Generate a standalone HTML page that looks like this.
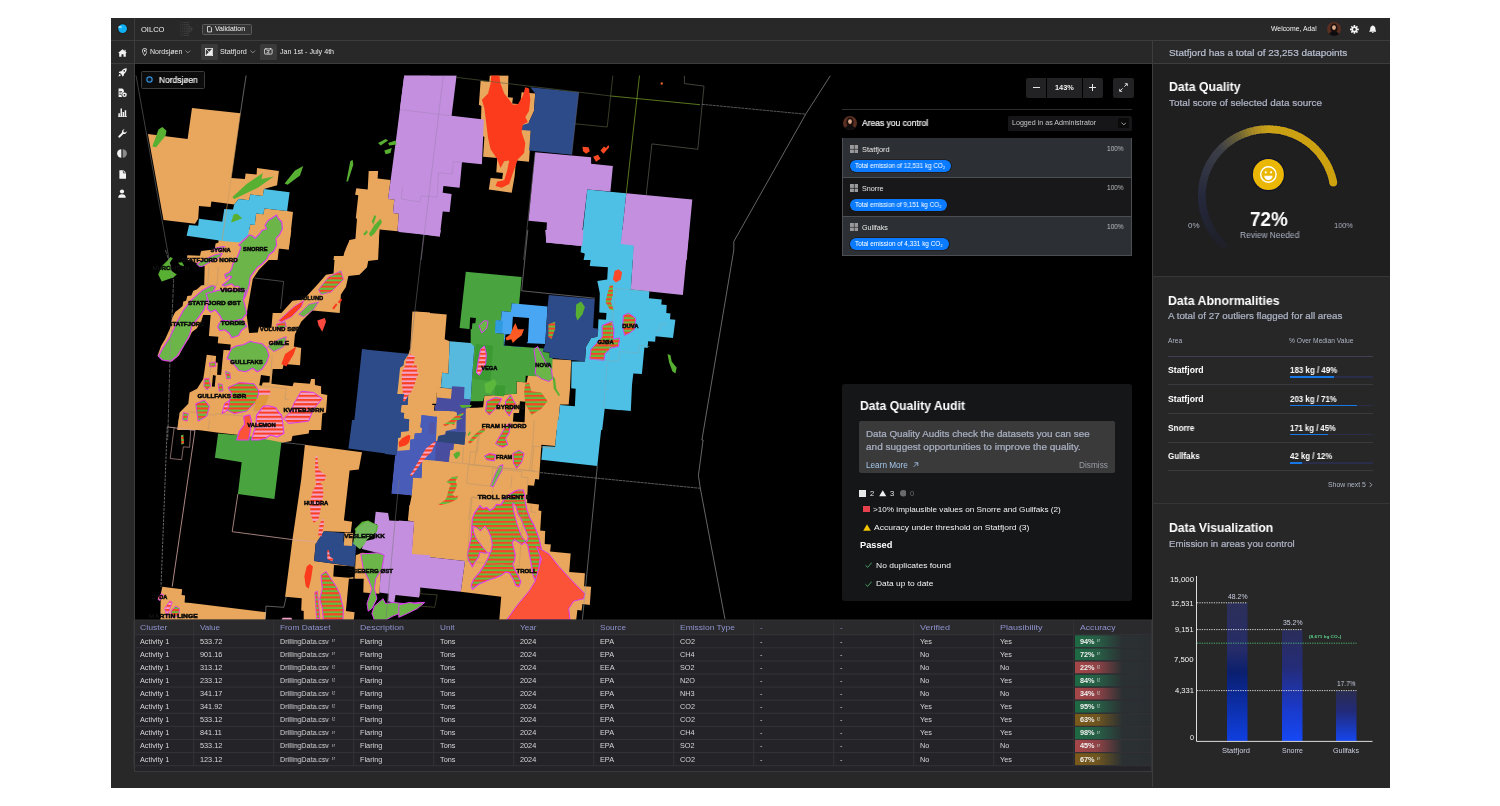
<!DOCTYPE html>
<html><head><meta charset="utf-8"><title>OILCO Validation</title>
<style>
*{box-sizing:border-box;margin:0;padding:0}
html,body{width:1500px;height:806px;background:#fff;overflow:hidden}
body{font-family:"Liberation Sans",sans-serif;color:#e6e6e6;position:relative}
.abs{position:absolute}
.t{position:absolute;white-space:nowrap;line-height:1;transform-origin:0 50%;will-change:transform}
#app{position:absolute;left:111px;top:18px;width:1279px;height:769.700px;background:#282828;overflow:hidden}
/* coordinates inside #app are offset by (-111,-18); we use a wrapper with page coords instead */
#pg{position:absolute;left:-111px;top:-18px;width:1500px;height:806px}
.hl{position:absolute;background:#3c3c3c;height:1px}
.vl{position:absolute;background:#3c3c3c;width:1px}
.b{font-weight:bold}
</style></head><body>
<div id="app"><div id="pg">
<div class="abs" style="left:111px;top:40px;width:1279px;height:1px;background:#3d3d3d;"></div>
<div class="abs" style="left:111px;top:63px;width:1041px;height:1px;background:#3d3d3d;"></div>
<div class="abs" style="left:134px;top:18px;width:1px;height:754px;background:#3d3d3d;"></div>
<svg class="abs" style="left:116.90px;top:23.20px" width="11" height="11" viewBox="0 0 11 11"><circle cx="5.5" cy="5.5" r="5" fill="#1a0f0c"/><circle cx="5.6" cy="5.6" r="4.4" fill="#10b0f5"/><rect x="1.2" y="3.4" width="3.6" height="1.1" rx=".5" fill="#fff"/></svg>
<div class="t" id="t0" style="top:25.62px;font-size:7.5px;color:#f0f0f0;left:140.80px;transform:scaleX(1.0067);">OILCO</div>
<svg class="abs" style="left:0;top:0" width="260" height="45"><rect x="180.0" y="22.2" width="0.8" height="0.8" fill="#fff" opacity="0.10"/><rect x="181.9" y="22.2" width="0.8" height="0.8" fill="#fff" opacity="0.15"/><rect x="183.8" y="22.2" width="0.8" height="0.8" fill="#fff" opacity="0.20"/><rect x="185.7" y="22.2" width="0.8" height="0.8" fill="#fff" opacity="0.25"/><rect x="187.6" y="22.2" width="0.8" height="0.8" fill="#fff" opacity="0.30"/><rect x="180.0" y="24.1" width="0.8" height="0.8" fill="#fff" opacity="0.10"/><rect x="181.9" y="24.1" width="0.8" height="0.8" fill="#fff" opacity="0.15"/><rect x="183.8" y="24.1" width="0.8" height="0.8" fill="#fff" opacity="0.20"/><rect x="185.7" y="24.1" width="0.8" height="0.8" fill="#fff" opacity="0.25"/><rect x="187.6" y="24.1" width="0.8" height="0.8" fill="#fff" opacity="0.30"/><rect x="180.0" y="25.9" width="0.8" height="0.8" fill="#fff" opacity="0.10"/><rect x="181.9" y="25.9" width="0.8" height="0.8" fill="#fff" opacity="0.15"/><rect x="183.8" y="25.9" width="0.8" height="0.8" fill="#fff" opacity="0.20"/><rect x="185.7" y="25.9" width="0.8" height="0.8" fill="#fff" opacity="0.25"/><rect x="187.6" y="25.9" width="0.8" height="0.8" fill="#fff" opacity="0.30"/><rect x="189.5" y="25.9" width="0.8" height="0.8" fill="#fff" opacity="0.35"/><rect x="180.0" y="27.8" width="0.8" height="0.8" fill="#fff" opacity="0.10"/><rect x="181.9" y="27.8" width="0.8" height="0.8" fill="#fff" opacity="0.15"/><rect x="183.8" y="27.8" width="0.8" height="0.8" fill="#fff" opacity="0.20"/><rect x="185.7" y="27.8" width="0.8" height="0.8" fill="#fff" opacity="0.25"/><rect x="187.6" y="27.8" width="0.8" height="0.8" fill="#fff" opacity="0.30"/><rect x="189.5" y="27.8" width="0.8" height="0.8" fill="#fff" opacity="0.35"/><rect x="191.4" y="27.8" width="0.8" height="0.8" fill="#fff" opacity="0.40"/><rect x="180.0" y="29.6" width="0.8" height="0.8" fill="#fff" opacity="0.10"/><rect x="181.9" y="29.6" width="0.8" height="0.8" fill="#fff" opacity="0.15"/><rect x="183.8" y="29.6" width="0.8" height="0.8" fill="#fff" opacity="0.20"/><rect x="185.7" y="29.6" width="0.8" height="0.8" fill="#fff" opacity="0.25"/><rect x="187.6" y="29.6" width="0.8" height="0.8" fill="#fff" opacity="0.30"/><rect x="189.5" y="29.6" width="0.8" height="0.8" fill="#fff" opacity="0.35"/><rect x="191.4" y="29.6" width="0.8" height="0.8" fill="#fff" opacity="0.40"/><rect x="180.0" y="31.4" width="0.8" height="0.8" fill="#fff" opacity="0.10"/><rect x="181.9" y="31.4" width="0.8" height="0.8" fill="#fff" opacity="0.15"/><rect x="183.8" y="31.4" width="0.8" height="0.8" fill="#fff" opacity="0.20"/><rect x="185.7" y="31.4" width="0.8" height="0.8" fill="#fff" opacity="0.25"/><rect x="187.6" y="31.4" width="0.8" height="0.8" fill="#fff" opacity="0.30"/><rect x="189.5" y="31.4" width="0.8" height="0.8" fill="#fff" opacity="0.35"/><rect x="180.0" y="33.3" width="0.8" height="0.8" fill="#fff" opacity="0.10"/><rect x="181.9" y="33.3" width="0.8" height="0.8" fill="#fff" opacity="0.15"/><rect x="183.8" y="33.3" width="0.8" height="0.8" fill="#fff" opacity="0.20"/><rect x="185.7" y="33.3" width="0.8" height="0.8" fill="#fff" opacity="0.25"/><rect x="187.6" y="33.3" width="0.8" height="0.8" fill="#fff" opacity="0.30"/><rect x="180.0" y="35.1" width="0.8" height="0.8" fill="#fff" opacity="0.10"/><rect x="181.9" y="35.1" width="0.8" height="0.8" fill="#fff" opacity="0.15"/><rect x="183.8" y="35.1" width="0.8" height="0.8" fill="#fff" opacity="0.20"/><rect x="185.7" y="35.1" width="0.8" height="0.8" fill="#fff" opacity="0.25"/><rect x="187.6" y="35.1" width="0.8" height="0.8" fill="#fff" opacity="0.30"/></svg>
<div class="abs" style="left:201.5px;top:24px;width:50.0px;height:11px;background:#333;border:1px solid #5a5a5a;border-radius:1.5px;"></div>
<svg class="abs" style="left:206.50px;top:26.20px" width="5" height="6.4" viewBox="0 0 5 6.4"><path d="M.5 .5h2.6l1.4 1.4v4H.5z" fill="none" stroke="#eee" stroke-width=".8"/></svg>
<div class="t" id="t1" style="top:26.44px;font-size:6.8px;color:#f2f2f2;left:214.50px;transform:scaleX(1.0218);">Validation</div>
<div class="t" id="t2" style="top:26.34px;font-size:6.8px;color:#f0f0f0;left:1271.20px;transform:scaleX(1.0089);">Welcome, Ada!</div>
<svg class="abs" style="left:1326.80px;top:22.30px" width="14" height="14" viewBox="0 0 14 14"><defs><clipPath id="av"><circle cx="7" cy="7" r="7"/></clipPath></defs><g clip-path="url(#av)"><rect width="14" height="14" fill="#5a2f22"/><ellipse cx="7" cy="6.3" rx="3.6" ry="4.8" fill="#1c0f0c"/><ellipse cx="7" cy="5.6" rx="1.9" ry="2.4" fill="#d9a98c"/><path d="M1.5 14c.5-3.6 2.8-4.6 5.5-4.6s5 1 5.5 4.6z" fill="#0d0d10"/></g></svg>
<svg class="abs" style="left:1350.00px;top:24.90px" width="8.8" height="8.8" viewBox="0 0 10 10"><g fill="#f2f2f2"><rect x="4.05" y="0" width="1.9" height="2.6" rx=".3" transform="rotate(0 5 5)"/><rect x="4.05" y="0" width="1.9" height="2.6" rx=".3" transform="rotate(45 5 5)"/><rect x="4.05" y="0" width="1.9" height="2.6" rx=".3" transform="rotate(90 5 5)"/><rect x="4.05" y="0" width="1.9" height="2.6" rx=".3" transform="rotate(135 5 5)"/><rect x="4.05" y="0" width="1.9" height="2.6" rx=".3" transform="rotate(180 5 5)"/><rect x="4.05" y="0" width="1.9" height="2.6" rx=".3" transform="rotate(225 5 5)"/><rect x="4.05" y="0" width="1.9" height="2.6" rx=".3" transform="rotate(270 5 5)"/><rect x="4.05" y="0" width="1.9" height="2.6" rx=".3" transform="rotate(315 5 5)"/><circle cx="5" cy="5" r="3.3"/></g><circle cx="5" cy="5" r="1.45" fill="#282828"/></svg>
<svg class="abs" style="left:1368.50px;top:25.10px" width="7.6" height="8.4" viewBox="0 0 9 10"><path d="M4.5 .4c.5 0 .8.3.8.8 1.500 .4 2.300 1.600 2.300 3.100 0 1.700.4 2.600 1.100 3.200v.6H.3v-.6C1 6.900 1.400 6 1.400 4.300c0-1.500.8-2.700 2.300-3.100 0-.5.300-.8.800-.8z" fill="#f2f2f2"/><path d="M3.400 8.700h2.200a1.100 1.100 0 0 1-2.200 0z" fill="#f2f2f2"/></svg>
<svg class="abs" style="left:117.80px;top:48.60px" width="9" height="8" viewBox="0 0 9 8"><path d="M4.5 .3 9 4.100H7.800V7.800H5.500V5.300H3.500V7.800H1.200V4.100H0z" fill="#f2f2f2"/><rect x="6.5" y=".8" width="1.1" height="2" fill="#f2f2f2"/></svg>
<svg class="abs" style="left:117.80px;top:68.30px" width="9" height="9" viewBox="0 0 9 9"><path d="M8.700 .3c.2 2.500-.8 4.300-2.700 5.600l-.3 1.900-1.500.8-.2-1.700L2.400 5.300.7 5.100l.8-1.500 1.900-.3C4.700 1.300 6.400.2 8.700.3z" fill="#f2f2f2"/><path d="M1.800 6.100 2.900 7.200C2.300 8 1.400 8.300.5 8.500c.2-.9.500-1.800 1.300-2.400z" fill="#f2f2f2"/><circle cx="6.200" cy="2.900" r=".8" fill="#282828"/></svg>
<svg class="abs" style="left:117.80px;top:88.45px" width="9" height="9.5" viewBox="0 0 9 9.5"><path d="M.6 .4h3.800l1.500 1.500V4.300a2.800 2.800 0 0 0-1.700 4.700H.6z" fill="#f2f2f2"/><rect x="1.300" y="3" width="2.700" height=".7" fill="#282828"/><rect x="1.300" y="4.500" width="2.200" height=".7" fill="#282828"/><rect x="1.300" y="6" width="1.900" height=".7" fill="#282828"/><circle cx="6.500" cy="6.800" r="2.300" fill="#f2f2f2"/><circle cx="6.500" cy="6.800" r=".9" fill="#282828"/></svg>
<svg class="abs" style="left:117.80px;top:108.30px" width="9" height="9" viewBox="0 0 9 9"><path d="M.4 8.800V5.300h1.500V8.800zM2.500 8.800V.4H4V8.800zM4.600 8.800V4h1.500V8.800zM6.700 8.800V2.300h1.500V8.800z" fill="#f2f2f2"/><rect x="0" y="8.300" width="9" height=".7" fill="#f2f2f2"/></svg>
<svg class="abs" style="left:117.80px;top:128.60px" width="9" height="9" viewBox="0 0 9 9"><path d="M8.700 2.300A2.600 2.600 0 0 1 5.300 4.900L1.900 8.400A1 1 0 0 1 .5 7L4 3.600A2.600 2.600 0 0 1 6.700 .3L5.300 1.700l.4 1.500 1.500.4z" fill="#f2f2f2"/></svg>
<svg class="abs" style="left:117.30px;top:149.10px" width="10" height="9" viewBox="0 0 10 9"><path d="M4.300 .3V8.700A4.200 4.200 0 0 1 4.300 .3z" fill="#f2f2f2"/><path d="M5.700 .3A4.200 4.200 0 0 1 5.700 8.700z" fill="#8a8a8a"/></svg>
<svg class="abs" style="left:118.55px;top:169.60px" width="7.5" height="9" viewBox="0 0 7.5 9"><path d="M.4 .3H4.600L7.100 2.800V8.700H.4z" fill="#f2f2f2"/><path d="M4.400 .5V3H6.900" fill="none" stroke="#282828" stroke-width=".7"/></svg>
<svg class="abs" style="left:118.30px;top:189.40px" width="8" height="9" viewBox="0 0 8 9"><circle cx="4" cy="2.500" r="2.100" fill="#f2f2f2"/><path d="M.2 8.800C.3 6.300 1.800 5.300 4 5.300s3.700 1 3.800 3.500z" fill="#f2f2f2"/></svg>
<svg class="abs" style="left:141.55px;top:47.50px" width="5.5" height="8" viewBox="0 0 5.5 8"><path d="M2.750 .4A2.350 2.350 0 0 1 5.100 2.750C5.100 4.500 2.750 7.600 2.750 7.600S.4 4.500 .4 2.750A2.350 2.350 0 0 1 2.750 .4z" fill="none" stroke="#eee" stroke-width=".8"/><circle cx="2.750" cy="2.750" r=".9" fill="#eee"/></svg>
<div class="t" id="t3" style="top:48.45px;font-size:7px;color:#e8e8e8;left:150.40px;transform:scaleX(0.9908);">Nordsjøen</div>
<svg class="abs" style="left:185.40px;top:50.15px" width="5.6" height="3.5" viewBox="0 0 5.6 3.5"><path d="M.5 .6 2.800 2.900 5.100 .6" fill="none" stroke="#aaa" stroke-width=".8"/></svg>
<div class="abs" style="left:201px;top:43.6px;width:16.599999999999994px;height:16.0px;background:#3a3a3a;border-radius:1.5px;"></div>
<svg class="abs" style="left:205.30px;top:47.60px" width="8" height="8" viewBox="0 0 8 8"><rect x=".4" y=".4" width="7.200" height="7.200" fill="none" stroke="#eee" stroke-width=".8"/><path d="M.8 7.200 7.200 .8V7.200z" fill="#eee"/><path d="M0 0 8 8" stroke="#eee" stroke-width=".8"/></svg>
<div class="t" id="t4" style="top:48.45px;font-size:7px;color:#e8e8e8;left:220.00px;transform:scaleX(1.0315);">Statfjord</div>
<svg class="abs" style="left:250.20px;top:50.15px" width="5.6" height="3.5" viewBox="0 0 5.6 3.5"><path d="M.5 .6 2.800 2.900 5.100 .6" fill="none" stroke="#aaa" stroke-width=".8"/></svg>
<div class="abs" style="left:260px;top:43.6px;width:16.80000000000001px;height:16.0px;background:#3a3a3a;border-radius:1.5px;"></div>
<svg class="abs" style="left:264.15px;top:48.35px" width="8.5" height="6.5" viewBox="0 0 8.5 6.5"><rect x=".4" y=".9" width="7.700" height="5.200" rx=".8" fill="none" stroke="#eee" stroke-width=".8"/><rect x="1.500" y="0" width=".8" height="1.600" fill="#eee"/><rect x="6.200" y="0" width=".8" height="1.600" fill="#eee"/><path d="M2.600 2.600h2.800L3.700 4.800M2.500 4.900h3" fill="none" stroke="#eee" stroke-width=".7"/></svg>
<div class="t" id="t5" style="top:48.45px;font-size:7px;color:#e8e8e8;left:279.50px;transform:scaleX(1.0223);">Jan 1st - July 4th</div><div class="abs" style="left:135px;top:64px;width:1017px;height:556px;background:#000"></div><svg class="abs" style="left:0;top:0" width="1500" height="806" viewBox="0 0 1500 806"><defs><clipPath id="mc"><rect x="135" y="75.300" width="1017" height="544.400"/></clipPath><pattern id="hrg" width="4" height="4.200" patternUnits="userSpaceOnUse"><rect width="4" height="4.200" fill="#60c03e"/><rect width="4" height="2.100" fill="#fb4226"/></pattern><pattern id="hrp" width="4" height="4.200" patternUnits="userSpaceOnUse"><rect width="4" height="4.200" fill="#f4a2c6"/><rect width="4" height="2.100" fill="#fb3f20"/></pattern><filter id="mb" x="0" y="0" width="1500" height="806" filterUnits="userSpaceOnUse"><feGaussianBlur stdDeviation="0.450"/></filter></defs><g clip-path="url(#mc)"><g filter="url(#mb)"><polygon points="147.9,133.9 187.6,138.9 192.0,107.9 240.4,113.3 231.2,177.9 244.9,179.1 245.6,173.6 256.6,174.6 257.0,167.9 278.9,170.9 277.1,185.3 264.0,189.0 262.8,196.0 250.3,194.5 249.1,200.2 238.7,199.0 234.2,204.4 211.4,201.4 210.6,206.9 199.0,205.9 198.2,218.8 195.0,223.8 163.5,220.0" fill="#e9a65d"/><polygon points="264.5,208.4 287.1,210.9 293.0,211.9 288.8,249.8 278.9,248.6 277.6,260.0 199.5,260.0 200.7,252.3 214.4,251.1 215.6,243.6 223.1,241.1 239.2,242.4 247.9,235.7 250.3,224.5 254.8,225.0 256.1,213.6 263.3,214.3" fill="#e9a65d"/><polygon points="368.7,170.9 378.1,170.9 377.6,178.6 390.5,179.9 388.1,199.0 394.3,199.5 393.0,213.1 398.7,213.8 397.5,231.2 379.4,229.5 378.1,248.6 354.6,246.1 354.1,260.0 333.5,260.0 334.0,256.0 343.9,256.0 344.9,251.1 348.4,251.1 349.6,239.9 355.3,240.6 357.0,218.8 355.8,218.3 358.3,195.2 355.1,194.7 356.3,188.3 367.7,189.5" fill="#e9a65d"/><polygon points="218.8,230.0 291.3,230.0 288.8,247.4 278.9,248.6 269.0,259.8 259.0,269.7 252.8,279.1 246.6,314.4 249.1,333.0 257.8,332.5 259.0,326.8 271.4,328.0 272.7,313.1 281.4,313.1 292.5,300.7 303.7,299.5 318.6,283.3 326.0,274.7 333.5,273.4 334.7,257.3 343.4,256.1 345.9,248.6 349.6,239.9 355.8,238.7 357.0,230.0 379.4,230.0 378.1,259.8 368.2,261.0 367.0,267.2 359.5,274.7 348.4,275.9 345.9,287.1 340.9,294.5 339.7,313.1 312.4,310.6 301.2,321.8 295.0,334.2 293.8,346.6 301.2,347.9 300.0,365.2 283.8,364.0 282.6,369.0 272.7,369.0 271.4,383.8 292.5,386.3 293.8,382.6 309.9,383.8 311.1,378.9 314.9,378.9 314.9,385.1 321.1,386.3 321.1,393.8 327.3,395.0 326.0,412.4 322.3,413.6 321.1,430.0 177.1,430.0 179.6,412.4 188.3,403.7 189.6,392.5 197.0,388.8 203.2,378.9 204.4,371.4 206.7,354.8 216.1,356.1 215.6,362.5 217.8,362.8 217.1,374.7 221.1,374.9 223.5,349.9 230.2,350.3 230.7,344.6 217.8,343.2 218.3,336.7 208.9,336.0 210.6,315.1 203.2,315.1 201.2,321.6 196.7,328.5 192.0,332.0 188.6,338.9 183.8,345.9 179.1,355.3 172.2,361.3 165.2,361.3 157.5,355.8 161.0,345.9 165.2,338.9 170.0,328.5 172.2,318.1 175.2,312.1 179.1,308.9 182.6,305.9 183.3,301.5 186.1,300.7 187.3,296.0 191.3,295.5 193.3,290.8 196.7,289.6 201.2,285.6 204.2,285.1 204.7,266.2 190.3,260.5 186.8,259.8 187.3,255.3 200.7,255.8 201.2,251.1 218.3,248.9 218.8,230.0" fill="#e9a65d"/><polygon points="415.4,311.4 430.0,312.6 430.0,414.9 422.8,414.9 420.3,430.0 403.0,430.0 404.2,413.6 401.7,412.4 403.0,388.8 399.2,387.6 400.5,373.9 405.4,369.0 406.7,354.1 410.4,354.1" fill="#e9a65d"/><polygon points="178.4,420.0 318.6,420.0 317.3,425.0 309.9,426.2 308.7,433.6 292.5,436.1 291.3,441.1 281.4,442.8 249.1,443.6 247.9,436.1 216.8,432.4 202.0,430.4 179.6,427.9" fill="#e9a65d"/><polygon points="304.9,444.8 362.0,452.3 358.8,469.6 349.6,470.4 343.9,520.5 352.1,521.7 350.8,532.2 324.0,531.2 315.6,544.1 314.1,560.9 354.6,566.4 353.3,578.8 348.9,578.8 345.9,611.1 354.6,612.3 353.8,620.0 303.7,620.0 303.7,611.1 301.2,610.6 301.7,598.2 285.1,596.7 292.5,539.1 301.2,479.6" fill="#e9a65d"/><polygon points="355.8,555.2 362.0,552.8 381.9,554.0 379.4,593.7 363.3,592.5 363.7,578.8 354.6,578.8" fill="#e9a65d"/><polygon points="410.4,428.7 415.4,427.4 420.3,428.7 419.1,434.9 414.1,438.6 412.9,451.0 396.7,449.3 398.0,441.1 409.2,434.9" fill="#e9a65d"/><polygon points="419.1,459.7 430.0,460.9 430.0,555.2 411.6,554.0 414.1,521.7 407.9,520.5 410.4,494.4 415.4,495.7 419.1,477.1" fill="#e9a65d"/><polygon points="162.3,586.7 182.1,589.2 181.6,594.9 185.1,595.4 184.6,602.4 190.8,603.1 266.0,612.3 265.2,620.0 160.3,620.0 160.8,593.7" fill="#e9a65d"/><polygon points="489.8,75.4 508.4,75.4 507.9,97.2 512.9,97.7 512.2,103.4 520.3,104.2 521.6,92.3 535.2,93.5 534.0,110.9 529.0,122.0 530.8,130.7 529.8,150.6 529.0,161.7 516.1,160.5 514.6,176.6 511.7,192.8 488.8,189.5 490.6,177.9 502.2,179.1 503.0,172.9 496.3,172.2 497.3,158.0 483.1,156.8 484.4,136.9 480.6,134.4 481.4,105.9 478.9,104.7 480.6,81.1 489.3,81.8" fill="#e9a65d"/><polygon points="412.4,311.4 446.7,314.4 444.7,339.2 449.6,341.2 448.4,373.4 442.2,372.7 440.9,387.6 437.2,388.8 436.0,403.7 432.3,403.7 431.0,416.1 419.9,414.9 418.6,430.0 398.8,430.0 398.8,416.1 407.4,414.9 409.9,354.1" fill="#e9a65d"/><polygon points="484.4,395.8 516.6,393.8 516.6,381.4 526.6,382.6 527.8,376.4 534.0,364.0 550.9,365.2 551.9,359.0 571.2,360.3 570.0,388.8 568.7,404.4 560.0,404.4 557.6,430.0 467.0,430.0 468.2,408.7 483.1,407.4" fill="#e9a65d"/><polygon points="467.0,420.0 557.6,420.0 555.1,446.1 541.4,444.8 539.0,479.6 535.2,479.1 534.0,485.8 527.8,485.3 527.0,503.1 539.0,504.4 538.5,510.6 541.4,511.1 540.2,530.4 545.2,530.9 544.7,544.1 550.9,544.6 550.1,551.5 570.7,553.5 569.2,571.9 584.9,573.3 584.1,586.3 591.1,586.7 589.8,604.9 582.4,604.1 581.6,610.6 577.4,610.1 576.2,620.0 499.3,620.0 501.2,596.7 460.8,591.7 465.0,560.9 411.9,555.2 414.9,519.3 408.7,518.8 412.4,478.3 419.9,478.8 421.1,460.9 448.4,462.2 449.6,452.3 463.3,453.5 465.0,443.6 465.8,429.9" fill="#e9a65d"/><polygon points="411.2,420.0 423.6,420.0 422.3,437.4 414.9,436.9 413.6,444.8 398.8,443.6 398.8,434.9 409.9,435.4" fill="#e9a65d"/><polygon points="437.2,420.0 457.6,420.0 456.6,427.9 445.9,426.9 445.2,431.9 436.7,431.2" fill="#e9a65d"/><polygon points="437.2,387.6 453.3,388.8 452.1,403.7 436.0,403.7" fill="#e9a65d"/><polygon points="261.0,375.1 269.9,376.2 269.4,382.4 262.7,382.4 261.8,385.7 259.3,385.5" fill="#000"/><polygon points="213.0,375.1 215.8,375.7 214.7,386.8 211.9,386.6" fill="#000"/><polygon points="334.0,564.9 354.4,566.5 354.0,577.1 348.8,577.7 333.3,576.4" fill="#000"/><polygon points="264.0,189.0 289.6,192.3 287.1,210.9 264.5,208.4 263.3,214.3 256.1,213.6 254.8,225.0 250.3,224.5 247.9,235.7 239.2,242.4 223.1,241.1 186.6,235.7 189.1,225.0 198.2,225.8 199.0,218.8 222.3,221.8 224.3,208.9 233.0,209.6 234.2,204.4 238.7,199.0 249.1,200.2 250.3,194.5 262.8,196.0" fill="#4fc0e5"/><polygon points="404.2,75.4 430.0,75.4 430.0,233.7 397.5,231.2 398.7,213.8 393.0,213.1 394.3,199.5 388.1,199.0 396.7,134.4" fill="#c48fdf"/><polygon points="362.0,349.1 410.4,354.1 403.0,430.0 353.3,430.0" fill="#2e4b89"/><polygon points="422.8,414.9 430.0,414.9 430.0,430.0 420.3,430.0" fill="#4a5ab0"/><polygon points="218.1,433.6 247.9,436.1 281.4,442.3 274.4,498.9 237.9,493.9 241.7,462.2 214.9,457.7" fill="#49a441"/><polygon points="352.1,420.0 400.5,420.0 395.5,454.7 348.4,448.5" fill="#2e4b89"/><polygon points="324.0,531.2 343.9,532.9 343.4,541.6 356.3,542.8 354.6,566.4 314.1,560.9 315.6,544.1" fill="#2e4b89"/><polygon points="400.5,420.0 415.4,420.0 414.9,425.0 430.0,426.2 430.0,439.9 412.9,438.6 411.6,452.3 410.4,475.8 419.1,477.1 415.4,495.7 391.8,492.0 395.5,454.7" fill="#4a5ab0"/><polygon points="412.9,438.6 430.0,439.9 430.0,477.1 410.4,475.8" fill="#4f5cc0"/><polygon points="375.7,511.8 388.1,513.1 389.3,520.5 414.1,521.7 411.6,554.0 430.0,555.2 430.0,586.3 420.3,586.7 419.1,597.4 395.5,594.9 394.3,602.4 388.1,601.6 388.6,593.7 379.4,592.5 381.9,554.0 362.0,549.0 363.3,541.6 374.4,539.1 376.9,524.2 374.4,523.7" fill="#c48fdf"/><polygon points="404.2,75.4 456.6,75.4 451.6,115.8 483.9,119.6 481.9,164.2 462.0,162.2 459.6,187.8 443.4,186.1 442.7,192.8 451.6,194.0 449.6,211.9 442.7,211.4 439.7,236.7 400.0,231.2 400.0,108.4" fill="#c48fdf"/><polygon points="530.3,87.3 578.7,92.3 571.7,154.8 529.0,150.6 530.8,130.7 521.6,130.0 522.3,125.0 528.3,123.3 534.0,110.9 535.2,93.5" fill="#2e4b89"/><polygon points="535.2,152.3 591.1,157.3 591.1,163.7 612.9,166.0 610.4,191.5 587.3,189.5 580.6,246.1 545.9,242.4 546.9,222.5 528.5,220.8" fill="#c48fdf"/><polygon points="587.3,189.5 626.3,193.3 620.8,244.9 633.7,246.1 632.8,260.0 583.6,260.0 584.9,253.5 580.6,252.3" fill="#4fc0e5"/><polygon points="626.3,193.3 692.3,199.5 686.6,260.0 632.8,260.0 633.7,246.1 620.8,244.9" fill="#c48fdf"/><polygon points="398.8,230.0 440.9,230.0 439.7,236.2 398.8,232.0" fill="#c48fdf"/><polygon points="545.2,230.0 583.6,230.0 582.4,246.1 546.4,242.4" fill="#c48fdf"/><polygon points="622.1,230.0 689.1,230.0 682.9,295.0 630.8,289.6 633.7,245.4 620.8,244.1" fill="#c48fdf"/><polygon points="583.6,230.0 622.1,230.0 620.8,244.1 633.7,245.4 630.8,289.6 649.4,291.3 648.9,298.2 661.8,299.5 661.3,304.4 666.7,304.9 666.3,313.1 670.5,313.6 670.0,319.3 675.4,319.8 673.0,337.9 655.6,336.2 655.1,341.7 648.1,341.2 647.6,347.9 644.4,347.6 641.9,373.9 633.3,373.4 632.0,385.1 630.8,411.1 604.7,408.7 602.2,430.0 557.6,430.0 560.0,404.9 574.9,406.2 575.7,388.8 571.2,388.3 571.7,361.5 584.9,361.5 586.1,346.6 591.1,337.9 597.3,336.7 598.0,329.3 598.5,319.3 606.0,319.8 606.5,313.1 599.3,312.4 599.8,293.3 597.3,280.9 607.2,279.6 607.9,267.2 589.8,266.0 590.6,259.8 584.9,253.6 581.9,252.3" fill="#4fc0e5"/><polygon points="465.8,271.7 521.6,277.1 519.1,304.4 511.7,303.2 510.9,311.9 501.7,311.1 501.0,320.6 496.3,320.1 495.0,333.0 504.2,333.7 503.7,345.4 523.3,347.1 543.9,348.6 543.2,352.1 549.6,352.8 549.6,357.5 552.6,358.0 551.9,376.9 525.8,375.7 525.3,382.6 516.6,381.4 516.6,393.8 484.4,395.8 483.1,401.2 470.7,401.2 472.0,378.9 474.4,346.6 470.7,345.4 470.7,329.3 459.6,328.0" fill="#49a441"/><polygon points="475.7,344.1 493.1,345.4 490.6,381.4 473.2,378.9" fill="#3b9b33"/><polygon points="495.5,385.1 505.5,385.8 504.2,396.3 494.3,395.8" fill="#3b9b33"/><polygon points="511.7,303.2 547.6,306.4 545.2,344.1 524.1,342.9 523.3,347.1 503.7,345.4 504.2,333.7 495.0,333.0 496.3,320.1 501.0,320.6 501.7,311.1 510.9,311.9" fill="#4aa6f2"/><polygon points="495.5,320.6 503.0,321.1 502.2,333.0 495.0,332.5" fill="#2f9ae0"/><polygon points="512.9,316.8 529.0,318.1 527.8,341.7 523.3,347.1 504.2,345.4 505.5,334.2 511.7,334.2" fill="#000"/><polygon points="548.9,295.0 594.8,299.0 593.1,328.0 598.5,328.8 597.3,336.7 591.1,337.9 586.1,346.6 584.9,361.5 549.6,357.8 549.4,352.3 542.7,351.6 545.2,344.1 547.6,306.4" fill="#2e4b89"/><polygon points="449.6,341.2 470.7,342.9 474.4,346.6 472.0,378.9 470.7,401.2 452.1,400.0 452.6,388.8 440.9,387.6 442.2,372.7 448.4,373.4" fill="#56b9dd"/><polygon points="398.8,354.1 403.7,354.6 409.9,354.1 407.4,414.9 398.8,416.1" fill="#2e4b89"/><polygon points="452.1,386.3 464.5,387.1 464.0,398.7 470.7,399.2 469.5,408.7 467.0,430.0 458.3,430.0 437.2,428.5 436.0,403.7 437.2,397.5 450.9,398.7" fill="#4a4ea0"/><polygon points="421.1,414.9 437.2,416.1 436.7,430.0 419.9,430.0" fill="#4a5fc8"/><polygon points="557.6,420.0 602.2,420.0 597.3,465.9 541.4,459.7 542.7,446.1 555.1,446.8" fill="#4fc0e5"/><polygon points="398.8,520.5 413.6,521.7 411.9,555.2 465.0,560.9 460.8,591.7 419.9,587.5 419.4,596.2 398.8,593.7" fill="#c48fdf"/><polygon points="398.8,420.0 467.0,420.0 465.0,443.6 463.3,453.5 449.6,452.3 448.4,462.2 421.1,460.9 419.9,478.8 412.4,478.3 409.9,494.4 398.8,493.9" fill="#4a5ab0"/><polygon points="398.8,420.0 409.9,420.0 408.7,429.9 398.8,429.4" fill="#2e4b89"/><polygon points="437.2,434.9 467.0,437.4 465.0,443.6 463.3,453.5 449.6,452.3 448.4,462.2 437.2,460.9" fill="#4a4ea0"/><polygon points="438.5,434.9 466.5,437.4 465.8,444.8 437.2,442.3" fill="#2f4a88"/><polygon points="423.6,420.0 437.2,420.0 436.7,431.2 437.2,434.9 436.0,452.3 421.1,451.0 422.3,437.4" fill="#4f5cc0"/><polygon points="465.6,408.1 485.0,407.5 485.0,505.0 409.8,505.0 411.7,495.6 412.9,477.6 421.6,478.2 422.2,459.6 448.9,462.1 450.1,450.3 453.2,449.7 453.9,443.5 464.4,444.7 465.6,432.3" fill="#e9a65d"/><polygon points="401.7,405.0 434.6,405.0 434.0,410.6 454.5,411.2 457.0,412.4 456.3,428.6 445.8,431.1 445.2,434.2 438.3,436.0 437.1,441.0 435.2,441.0 435.9,417.4 421.6,414.9 420.4,427.3 422.2,428.0 421.6,432.9 414.8,433.5 414.2,439.1 410.4,439.7 409.8,450.3 397.4,450.9 398.0,437.9 400.5,437.3 401.1,431.7 408.6,431.1 409.2,419.3 403.6,418.6 404.2,413.1 400.5,412.4" fill="#e9a65d"/><polygon points="385.0,405.0 401.1,405.0 400.5,412.4 404.2,413.1 403.6,418.6 409.2,419.3 408.6,431.1 401.1,431.7 400.5,437.3 398.0,437.9 396.8,455.2 385.0,454.0" fill="#2e4b89"/><polygon points="414.8,433.5 421.6,432.9 422.2,428.0 420.4,427.3 421.6,414.9 437.1,416.8 435.9,441.0 435.2,459.6 422.2,459.6 421.6,478.2 412.9,477.6 411.7,495.6 391.2,493.7 394.9,455.9 396.8,455.2 397.4,450.9 409.8,450.3 410.4,439.7 414.2,439.1" fill="#4a5cb8"/><polygon points="429.0,421.7 435.2,422.4 434.6,434.2 428.4,433.5" fill="#5055a8"/><polygon points="437.1,441.6 453.9,443.5 453.2,449.7 450.1,450.3 448.9,462.1 435.2,460.2 435.9,441.0" fill="#4a4ea0"/><polygon points="446.4,431.1 465.6,432.3 464.4,444.7 453.9,443.5 438.3,441.6 439.0,436.0 445.2,434.8" fill="#2f4478"/><polygon points="435.2,405.0 465.6,405.0 470.6,407.5 465.6,408.7 465.0,431.7 457.0,431.1 457.0,412.4 454.5,411.2 434.6,410.6" fill="#4a4ea0"/><polygon points="385.0,454.6 394.9,455.9 391.2,493.7 411.7,495.6 409.8,505.0 385.0,505.0" fill="#000"/><polygon points="344.5,532.4 353.2,533.0 351.9,546.0 343.9,545.4" fill="#e9a65d"/><polygon points="158.5,129.5 162.3,127.0 166.5,130.7 165.5,135.7 156.1,147.3 152.3,146.4" fill="#59b032"/><polygon points="232.5,197.0 246.6,184.1 262.8,172.9 261.5,179.1 273.9,176.6 257.8,187.8 234.2,199.0" fill="#59b032"/><polygon points="284.6,183.6 295.0,170.4 303.2,166.0 300.0,175.4 287.6,184.8" fill="#59b032"/><polygon points="346.4,181.6 350.3,161.2 352.6,159.8 353.3,164.7 347.9,181.6" fill="#59b032"/><polygon points="231.0,222.5 233.7,214.3 237.2,213.8 242.2,218.3 233.7,221.8" fill="#59b032"/><polygon points="378.1,143.1 385.6,138.9 388.1,140.6 380.6,145.6" fill="#59b032"/><polygon points="388.1,143.1 395.5,140.6 396.7,144.4 389.3,145.6" fill="#59b032"/><polygon points="384.3,150.6 391.8,148.1 390.5,153.1 385.6,154.3" fill="#59b032"/><polygon points="369.0,233.7 374.4,225.0 380.6,218.8 381.9,222.5 374.4,233.7 370.7,236.7" fill="#59b032"/><polygon points="371.9,221.3 374.4,215.1 376.2,216.3 373.2,225.0" fill="#59b032"/><polygon points="363.3,233.7 367.0,230.0 367.7,232.5 364.5,235.7" fill="#59b032"/><polygon points="278.9,320.6 293.8,306.9 303.7,300.7 301.2,306.9 291.3,316.8 281.4,321.8" fill="#fb3a1d" stroke="#dc3cf2" stroke-width="0.8" stroke-linejoin="round"/><polygon points="298.7,314.4 308.7,304.4 318.6,302.0 313.6,309.4 303.7,316.8" fill="#6cb548" stroke="#dc3cf2" stroke-width="0.8" stroke-linejoin="round"/><polygon points="318.6,289.6 328.5,277.1 340.9,270.9 343.4,279.6 336.0,287.1 331.0,292.0 321.1,294.5" fill="url(#hrg)" stroke="#dc3cf2" stroke-width="0.8" stroke-linejoin="round"/><polygon points="332.2,308.2 336.0,303.2 337.4,304.4 334.0,309.4" fill="#fb3a1d"/><polygon points="337.9,302.0 340.9,298.2 342.2,300.0 339.2,303.4" fill="#fb3a1d"/><polygon points="317.3,320.6 324.8,318.1 326.0,321.8 322.3,331.7 318.6,325.5" fill="#fb4a40"/><polygon points="281.4,364.0 285.1,354.1 296.3,346.6 293.8,354.1 286.3,366.5" fill="#fb3a1d"/><polygon points="267.7,346.6 278.9,339.2 286.3,336.7 283.8,346.6 273.9,351.6" fill="#6cb548" stroke="#dc3cf2" stroke-width="0.8" stroke-linejoin="round"/><polygon points="276.4,324.3 285.1,321.8 286.3,326.8 278.9,329.3" fill="url(#hrg)" stroke="#dc3cf2" stroke-width="0.8" stroke-linejoin="round"/><polygon points="228.0,387.6 239.2,382.6 254.1,383.8 259.0,391.3 256.6,401.2 246.6,411.1 234.2,413.6 224.3,408.7 229.3,401.2 231.7,393.8" fill="url(#hrg)" stroke="#dc3cf2" stroke-width="1.0" stroke-linejoin="round"/><polygon points="195.8,403.7 204.4,400.0 209.4,406.2 206.9,416.1 198.2,421.1 197.0,413.6" fill="url(#hrg)" stroke="#dc3cf2" stroke-width="1.0" stroke-linejoin="round"/><polygon points="204.4,378.9 208.9,378.4 210.6,386.3 206.9,390.0 203.9,386.3" fill="url(#hrg)" stroke="#dc3cf2" stroke-width="0.8" stroke-linejoin="round"/><polygon points="218.1,383.8 222.3,384.3 223.1,390.8 219.3,391.3" fill="url(#hrg)" stroke="#dc3cf2" stroke-width="0.8" stroke-linejoin="round"/><polygon points="225.5,371.4 229.8,372.7 230.5,378.4 226.8,378.9" fill="url(#hrg)" stroke="#dc3cf2" stroke-width="0.8" stroke-linejoin="round"/><polygon points="209.4,362.8 215.6,362.0 215.6,366.5 209.9,367.0" fill="url(#hrg)" stroke="#dc3cf2" stroke-width="0.8" stroke-linejoin="round"/><polygon points="183.3,412.4 188.3,413.6 187.1,421.1 182.6,419.8" fill="url(#hrg)" stroke="#dc3cf2" stroke-width="0.8" stroke-linejoin="round"/><polygon points="255.3,401.2 264.0,388.8 269.0,396.3 264.0,408.7 254.1,411.1" fill="#e09a3c"/><polygon points="259.0,388.8 270.2,390.0 270.2,395.0 259.0,395.0" fill="url(#hrp)"/><polygon points="293.8,403.7 301.2,391.3 313.6,392.5 322.3,398.7 313.6,408.7 308.7,421.1 288.8,423.5 283.8,418.6 291.3,411.1" fill="url(#hrp)" stroke="#dc3cf2" stroke-width="1.0" stroke-linejoin="round"/><polygon points="354.6,529.2 362.0,521.7 368.2,520.5 378.1,525.5 376.9,531.7 368.2,536.6 360.8,549.0 357.0,546.6 358.3,536.6" fill="#59b032"/><polygon points="360.8,554.0 378.1,552.8 384.3,555.2 381.9,568.9 375.7,578.8 374.4,588.7 376.9,598.7 371.9,608.6 368.2,611.1 367.0,603.6 371.9,588.7 368.2,578.8 363.3,568.9" fill="#6cb548" stroke="#dc3cf2" stroke-width="1.0" stroke-linejoin="round"/><polygon points="374.4,606.1 383.1,598.7 385.6,603.6 393.0,602.4 403.0,603.6 424.0,602.4 415.4,608.6 403.0,612.3 393.0,616.0 385.6,620.0 374.4,620.0 371.9,613.5" fill="#6cb548" stroke="#dc3cf2" stroke-width="1.0" stroke-linejoin="round"/><polygon points="315.6,456.0 317.3,456.0 318.6,469.6 326.0,475.8 324.8,480.8 318.6,482.0 322.3,484.5 323.5,494.4 321.1,506.8 318.6,519.3 313.6,523.0 310.6,514.3 309.9,501.9 312.4,492.0 316.1,484.5 314.9,469.6" fill="url(#hrp)"/><polygon points="319.8,523.0 323.5,518.0 324.0,524.2 321.6,536.6 318.1,535.4" fill="url(#hrp)"/><polygon points="327.3,550.3 329.0,550.3 329.8,556.5 333.5,559.0 332.2,561.4 327.3,559.0" fill="url(#hrp)"/><polygon points="306.7,566.4 309.9,563.9 312.9,566.4 311.1,578.8 308.7,588.7 305.7,586.3 304.4,576.3" fill="#fb3a1d"/><polygon points="321.1,575.1 326.0,571.4 331.0,578.8 336.0,586.3 339.7,593.7 343.4,608.6 342.9,620.0 323.5,620.0 322.3,608.6 319.8,598.7 322.3,588.7" fill="url(#hrg)" stroke="#dc3cf2" stroke-width="1.0" stroke-linejoin="round"/><polygon points="314.9,592.5 317.3,591.2 318.6,603.6 319.8,618.5 316.6,618.5 315.6,603.6" fill="url(#hrg)" stroke="#dc3cf2" stroke-width="0.8" stroke-linejoin="round"/><polygon points="164.7,608.6 169.7,601.1 172.2,602.4 167.2,616.0" fill="url(#hrp)" stroke="#dc3cf2" stroke-width="0.8" stroke-linejoin="round"/><polygon points="170.9,611.1 175.9,606.1 179.6,608.6 178.4,616.0 172.2,617.3" fill="url(#hrg)" stroke="#dc3cf2" stroke-width="0.8" stroke-linejoin="round"/><polygon points="157.3,598.7 161.0,593.7 163.5,594.9 159.8,600.6" fill="url(#hrp)" stroke="#dc3cf2" stroke-width="0.8" stroke-linejoin="round"/><polygon points="180.9,435.4 183.3,434.4 184.1,443.6 181.4,444.8" fill="url(#hrg)"/><polygon points="281.4,620.0 282.6,617.8 291.3,617.8 292.5,620.0" fill="#f5a0c8"/><polygon points="491.3,75.4 499.3,75.4 500.5,83.6 504.2,93.5 509.2,99.7 512.9,104.7 517.9,104.2 522.8,96.0 525.3,87.3 529.0,88.5 530.3,99.7 529.0,110.9 525.3,117.1 527.8,122.0 522.8,124.5 521.6,132.0 525.3,143.1 524.1,153.1 517.9,159.3 512.9,172.9 509.2,184.1 501.7,187.8 495.5,186.1 497.3,181.6 504.2,180.3 507.2,170.4 509.2,160.5 504.2,161.2 500.5,167.9 497.3,159.3 490.6,149.3 488.1,138.2 484.4,108.4 481.9,99.7 488.1,93.5 490.6,83.6" fill="#fb3a1d"/><polygon points="582.4,146.8 588.6,147.3 589.8,151.3 586.1,153.8 583.1,151.3" fill="#f94a24"/><polygon points="593.1,156.8 598.0,154.8 600.5,158.8 596.0,161.7" fill="#f94a24"/><polygon points="600.5,150.6 604.0,146.4 606.0,148.1 608.4,144.9 609.2,147.3 603.5,153.8" fill="#f94a24"/><polygon points="660.5,82.8 662.5,82.3 663.0,84.3 661.0,84.8" fill="#f56a2a"/><polygon points="484.4,383.8 494.3,378.9 496.8,383.8 490.6,393.8 485.6,392.5" fill="#5cb83c"/><polygon points="505.5,337.9 510.4,334.2 512.9,328.0 515.4,323.1 517.9,329.3 524.1,329.3 521.6,335.5 516.6,339.2 512.9,342.9 511.2,339.2 506.7,340.4" fill="#fb5a24"/><polygon points="480.6,349.1 484.4,346.1 486.4,354.1 485.6,364.0 479.4,375.2 476.4,372.7 478.2,361.5" fill="url(#hrp)" stroke="#dc3cf2" stroke-width="1.0" stroke-linejoin="round"/><polygon points="478.9,325.5 484.4,320.6 488.1,321.3 486.8,328.0 481.9,333.0" fill="#6cb548" stroke="#dc3cf2" stroke-width="1.0" stroke-linejoin="round"/><polygon points="548.4,324.3 555.1,321.8 555.1,329.3 551.4,339.2 548.4,336.7" fill="url(#hrg)"/><polygon points="576.2,304.4 581.1,301.5 584.9,306.9 582.4,314.4 577.4,320.6 575.7,315.6" fill="#59b032"/><polygon points="486.8,401.2 495.5,397.5 501.7,398.7 498.0,406.2 489.3,414.9 485.6,411.1" fill="url(#hrg)" stroke="#dc3cf2" stroke-width="1.0" stroke-linejoin="round"/><polygon points="505.5,401.2 510.4,395.0 515.4,403.7 509.2,416.1 505.5,411.1" fill="url(#hrg)" stroke="#dc3cf2" stroke-width="1.0" stroke-linejoin="round"/><polygon points="525.3,383.8 529.0,382.6 531.5,391.3 541.4,392.5 547.6,401.2 541.4,408.7 531.5,414.9 525.3,403.7 524.1,391.3" fill="url(#hrg)"/><polygon points="534.0,349.1 537.7,346.6 541.4,354.1 546.4,364.0 551.4,369.0 552.6,378.9 548.9,381.4 541.4,378.9 535.2,373.9 536.0,364.0" fill="#6cb548" stroke="#dc3cf2" stroke-width="1.0" stroke-linejoin="round"/><polygon points="552.6,375.2 555.1,378.9 556.3,388.8 560.0,395.0 558.8,396.3 553.8,388.8" fill="#59b032"/><polygon points="614.6,270.9 618.4,269.2 622.1,272.2 620.8,279.6 615.9,282.6 612.9,279.6" fill="#fb4a2a"/><polygon points="609.7,285.8 612.9,285.1 612.9,294.5 610.9,302.0 613.9,310.6 609.7,309.4 605.5,302.0 607.2,294.5" fill="url(#hrg)"/><polygon points="623.3,315.6 628.3,313.1 635.7,318.1 634.5,329.3 629.5,333.0 624.6,335.5 622.8,326.8" fill="url(#hrg)" stroke="#dc3cf2" stroke-width="1.0" stroke-linejoin="round"/><polygon points="602.2,325.5 612.2,321.3 613.9,329.3 613.4,339.2 619.6,337.9 618.4,346.6 610.9,347.9 604.7,354.1 604.0,360.3 589.8,359.0 591.1,349.1 596.0,344.1 602.2,336.7" fill="url(#hrg)" stroke="#dc3cf2" stroke-width="1.0" stroke-linejoin="round"/><polygon points="667.5,354.1 670.5,355.3 671.7,361.5 676.7,367.7 675.4,373.4 672.5,371.4 669.2,362.8" fill="#59b032"/><polygon points="519.9,401.2 525.3,401.7 524.6,422.3 512.9,421.6 513.6,413.1 519.1,413.1" fill="#000"/><polygon points="495.5,443.6 500.5,434.9 506.7,425.0 510.4,423.7 509.2,432.4 505.5,438.6 507.9,444.8 503.0,447.3 499.3,446.1" fill="url(#hrg)" stroke="#dc3cf2" stroke-width="1.0" stroke-linejoin="round"/><polygon points="484.4,456.0 489.3,453.5 495.5,454.7 494.3,460.9 486.8,459.7" fill="url(#hrg)" stroke="#dc3cf2" stroke-width="1.0" stroke-linejoin="round"/><polygon points="512.9,453.5 519.1,450.3 524.1,453.5 521.6,462.2 516.6,468.4 513.6,463.4" fill="url(#hrg)" stroke="#dc3cf2" stroke-width="1.0" stroke-linejoin="round"/><polygon points="490.6,485.8 495.5,473.3 499.3,465.9 503.0,464.7 501.7,470.9 496.8,479.6 493.1,487.0" fill="#6cb548" stroke="#dc3cf2" stroke-width="1.0" stroke-linejoin="round"/><polygon points="479.9,505.5 483.0,508.6 486.7,507.4 489.8,510.5 493.5,508.6 496.6,504.3 500.9,504.9 504.0,499.9 509.0,495.0 514.6,491.2 518.3,490.0 523.3,490.0 524.5,495.0 525.1,501.2 527.0,509.9 529.5,517.3 533.2,523.5 536.9,532.2 539.4,539.6 541.3,548.3 540.6,554.5 539.4,564.4 538.2,575.6 535.7,581.8 533.2,575.6 531.3,564.4 529.5,554.5 527.6,544.6 524.5,542.1 522.0,544.6 518.3,542.1 514.6,539.6 512.1,542.1 513.3,547.1 515.2,554.5 514.6,560.7 512.7,564.4 514.6,569.4 518.3,575.6 520.8,581.8 518.9,586.8 515.8,585.5 513.3,579.3 509.6,573.1 505.9,571.9 500.9,575.6 494.7,578.1 487.3,580.6 478.6,584.3 472.4,589.3 471.2,585.5 473.6,579.3 479.9,571.9 484.8,564.4 488.5,557.0 490.4,552.0 484.8,553.3 479.9,552.0 478.6,557.0 474.9,562.0 472.4,566.9 471.2,564.4 468.7,560.7 467.4,554.5 469.3,545.8 471.2,537.1 471.8,527.2 472.4,518.5 474.9,512.3" fill="url(#hrg)" stroke="#dc3cf2" stroke-width="1.1" stroke-linejoin="round"/><polygon points="473.0,526.0 476.7,527.8 480.5,530.9 484.8,526.0 488.5,530.9 491.0,537.1 492.3,544.6 491.0,552.0 487.9,553.3 483.6,548.3 479.9,543.3 476.1,538.4 473.6,532.2" fill="#e9a65d" stroke="#dc3cf2" stroke-width="1.0" stroke-linejoin="round"/><polygon points="512.7,503.0 515.8,506.1 518.3,514.8 520.8,518.5 523.3,524.7 525.8,530.9 528.2,537.1 527.0,541.5 523.9,539.6 520.8,534.7 517.7,526.0 515.2,517.3 513.3,509.9" fill="#e9a65d" stroke="#dc3cf2" stroke-width="1.0" stroke-linejoin="round"/><polygon points="536.5,546.6 548.9,554.0 558.8,566.4 571.2,580.0 584.9,593.7 583.6,598.7 573.7,601.1 568.7,608.6 570.0,620.0 506.7,620.0 516.6,606.1 529.0,591.2 535.2,581.3 541.4,559.0" fill="#fb5238" stroke="#dc3cf2" stroke-width="1.0" stroke-linejoin="round"/><polygon points="398.8,604.9 409.9,602.4 414.9,603.6 424.8,602.4 417.4,608.6 407.4,613.5 398.8,617.3" fill="#6cb548" stroke="#dc3cf2" stroke-width="1.0" stroke-linejoin="round"/><polygon points="276.6,215.0 278.3,218.5 281.8,222.0 282.4,229.0 279.5,234.8 276.0,238.3 276.6,245.3 273.7,251.2 269.0,254.7 266.7,259.3 262.0,264.0 257.3,267.5 253.8,272.2 250.3,276.8 249.2,285.0 247.4,290.8 245.7,295.5 243.3,300.2 242.2,296.7 241.0,289.7 238.7,286.2 234.0,286.2 231.7,283.8 224.7,286.2 222.3,285.0 227.0,281.5 231.7,276.8 229.3,275.7 225.8,278.6 224.7,274.5 229.3,272.2 231.7,268.7 232.8,264.0 236.3,259.3 238.7,253.5 241.0,247.1 238.7,244.8 244.5,239.5 249.2,234.8 252.7,236.0 255.0,238.3 259.7,233.7 262.0,230.2 266.7,229.0 264.9,225.5 267.8,220.8 271.3,218.5" fill="#6cb548" stroke="#dc3cf2" stroke-width="1.1" stroke-linejoin="round"/><polygon points="196.7,264.0 204.8,259.3 215.3,254.7 222.3,253.5 220.0,257.0 210.7,261.7 202.5,266.3 199.0,266.3" fill="#6cb548" stroke="#dc3cf2" stroke-width="1.0" stroke-linejoin="round"/><polygon points="213.0,248.8 220.0,247.1 224.7,246.5 222.3,248.8 215.3,250.6" fill="#6cb548" stroke="#dc3cf2" stroke-width="1.0" stroke-linejoin="round"/><polygon points="158.2,274.5 161.7,266.3 167.5,260.5 170.4,257.0 172.8,258.2 169.8,262.8 171.6,271.0 176.8,274.5 173.3,277.4 161.7,281.5" fill="#59b032"/><polygon points="178.0,262.8 182.1,262.3 184.4,266.3 180.3,265.2" fill="#59b032"/><polygon points="211.9,285.6 202.0,290.6 192.0,299.3 183.3,310.4 175.9,324.1 169.7,337.7 162.3,348.9 158.5,356.3 162.3,360.0 170.9,361.3 177.1,356.3 183.3,346.4 189.6,335.2 192.0,325.3 198.2,317.9 204.4,309.2 206.9,299.3 213.1,291.8 215.6,286.8" fill="#6cb548" stroke="#dc3cf2" stroke-width="1.1" stroke-linejoin="round"/><polygon points="206.0,293.5 220.0,290.0 245.7,290.0 243.3,299.3 246.8,313.3 242.2,319.2 231.7,321.5 222.3,320.3 220.0,315.7 215.3,309.8 210.7,312.2 207.2,308.7 208.3,301.7" fill="#6cb548" stroke="#dc3cf2" stroke-width="1.1" stroke-linejoin="round"/><polygon points="218.8,323.8 222.3,320.3 231.7,321.5 242.2,319.2 246.8,326.2 241.0,330.8 238.7,335.5 231.7,337.8 229.3,333.2 224.7,329.7 220.0,330.8 217.7,327.3" fill="#6cb548" stroke="#dc3cf2" stroke-width="1.1" stroke-linejoin="round"/><polygon points="231.7,348.3 236.3,346.0 243.3,344.8 250.3,341.3 255.0,342.5 262.0,343.7 266.7,348.3 269.0,355.3 266.7,362.3 262.0,369.3 257.3,371.7 252.7,368.2 245.7,371.7 238.7,370.5 234.0,364.7 230.5,360.0 227.0,358.8 229.3,353.0" fill="#6cb548" stroke="#dc3cf2" stroke-width="1.1" stroke-linejoin="round"/><polygon points="408.3,354.8 410.0,349.0 415.8,349.6 415.8,354.8 420.5,363.6 419.9,381.7 414.7,394.0 397.2,394.0 397.8,389.8 400.1,367.7 403.6,365.3 404.2,360.7" fill="#e9a65d"/><polygon points="410.0,354.3 414.7,356.0 414.1,363.0 411.2,368.8 414.7,374.7 419.3,371.8 417.0,377.0 414.7,381.7 412.9,388.7 410.0,394.0 403.0,394.0 401.8,381.7 401.8,372.3 405.3,365.3 406.5,358.3" fill="url(#hrp)"/><polygon points="405.0,401.2 414.9,383.8 417.4,369.0 416.1,364.0 409.9,369.0 405.0,388.8 403.0,401.2" fill="url(#hrp)"/><polygon points="470.1,317.5 475.9,318.1 475.3,323.3 472.4,323.3 471.8,329.2 469.5,329.2" fill="#000"/><polygon points="409.8,475.1 411.7,472.6 425.9,448.4 434.6,441.6 435.9,442.8 432.8,448.4 432.1,451.5 427.2,455.9 421.0,463.3 414.8,472.0 411.7,476.3" fill="url(#hrp)"/><polygon points="398.6,442.2 402.4,437.9 408.6,434.8 410.4,436.0 409.2,442.2 406.1,445.3 399.3,447.2" fill="#fb3a1d"/><polygon points="442.7,424.9 449.5,421.1 454.5,416.8 463.2,412.4 463.8,414.3 459.4,417.4 462.5,418.6 455.7,421.1 453.9,425.5 450.8,423.6 445.8,426.1" fill="url(#hrg)"/><polygon points="468.1,442.2 474.3,434.8 480.5,429.8 485.0,427.3 485.0,431.1 479.3,434.8 474.3,439.7 470.0,444.1" fill="url(#hrg)"/><polygon points="453.2,454.6 456.3,452.1 459.4,451.5 460.1,454.6 457.6,458.3 455.7,459.0" fill="#59b032"/><polygon points="467.5,434.8 470.0,431.1 470.6,432.9 468.7,436.0" fill="#59b032"/><polygon points="459.4,405.0 471.8,405.0 470.6,406.9 465.6,407.5 461.9,408.1" fill="#59b032"/><polygon points="446.4,481.9 452.0,477.0 458.2,476.3 455.7,480.7 457.0,485.6 454.5,491.8 452.0,494.3 455.7,496.8 458.2,495.0 457.0,499.3 449.5,503.0 440.8,505.0 438.3,504.3 444.6,500.5 447.0,496.8 448.3,490.6 450.8,484.4" fill="url(#hrg)"/><polygon points="243.7,416.4 249.8,414.8 251.5,421.5 250.6,428.2 248.7,440.0 236.8,440.0 239.2,431.5 244.6,424.3" fill="#fb5238" stroke="#dc3cf2" stroke-width="1.1" stroke-linejoin="round"/><polygon points="256.5,415.3 263.2,406.4 268.3,405.8 275.5,407.5 278.9,412.5 281.7,415.3 282.8,423.7 283.9,433.2 277.2,437.1 270.5,434.9 266.0,438.2 259.3,440.0 251.5,440.0 253.7,432.6 256.0,425.9" fill="url(#hrp)" stroke="#dc3cf2" stroke-width="1.1" stroke-linejoin="round"/><polygon points="224.7,403.6 229.2,400.8 228.6,407.5 225.3,412.0 221.9,413.6" fill="url(#hrp)" stroke="#dc3cf2" stroke-width="1.0" stroke-linejoin="round"/><polygon points="356.9,527.4 366.8,521.2 376.7,525.0 375.5,532.4 366.8,539.8 364.3,544.8 359.4,549.1 353.2,543.6 354.4,534.9" fill="#6fb85a"/><polyline points="136.0,75.4 169.2,260.0" fill="none" stroke="#7c7c7c" stroke-width="0.5"/><polyline points="246.1,75.4 240.4,113.3" fill="none" stroke="#8a8a8a" stroke-width="0.7"/><polyline points="240.4,113.3 231.2,177.9 221.8,242.4" fill="none" stroke="#c79a62" stroke-width="0.6"/><polyline points="167.2,426.9 195.0,430.4 172.2,586.7" fill="none" stroke="#d6a8a3" stroke-width="0.8"/><polyline points="190.8,429.4 189.6,447.3 183.3,446.8 181.6,459.7 170.2,458.5 174.2,427.4" fill="none" stroke="#d6a8a3" stroke-width="0.6"/><polyline points="167.2,426.9 161.0,586.7" fill="none" stroke="#b0b0b0" stroke-width="0.6" stroke-dasharray="2.500 1.200"/><polyline points="237.9,493.9 232.2,531.7 292.5,539.6 317.3,542.1" fill="none" stroke="#d6a8a3" stroke-width="0.75"/><polyline points="286.3,596.7 283.8,607.3 266.0,606.1 265.2,620.0" fill="none" stroke="#b8b8b8" stroke-width="0.5"/><polyline points="281.9,442.3 304.9,444.8" fill="none" stroke="#999" stroke-width="0.5"/><polyline points="456.6,77.4 610.9,96.0" fill="none" stroke="#5d6640" stroke-width="0.6"/><polyline points="610.9,96.0 700.0,104.7" fill="none" stroke="#7ea62c" stroke-width="0.7"/><polyline points="639.5,75.4 626.3,193.3" fill="none" stroke="#7ea62c" stroke-width="0.7"/><polyline points="612.9,75.4 607.2,127.0 574.9,123.8" fill="none" stroke="#5d6640" stroke-width="0.6"/><polyline points="684.4,75.6 684.4,83.6 704.0,86.1 697.8,149.3 651.9,143.9 646.2,195.2" fill="none" stroke="#6a6f60" stroke-width="0.6"/><polyline points="443.4,75.4 421.1,260.0" fill="none" stroke="#9b7fae" stroke-width="0.5"/><polyline points="400.0,109.6 451.6,115.8" fill="none" stroke="#a483bb" stroke-width="0.5"/><polyline points="402.5,187.0 401.2,199.0 419.9,201.9 421.1,196.0 437.2,197.0 438.5,172.9 452.1,174.1 453.3,161.7 462.0,162.2" fill="none" stroke="#a483bb" stroke-width="0.5"/><polyline points="535.2,152.3 523.6,260.0" fill="none" stroke="#777" stroke-width="0.5"/><polyline points="578.7,92.3 571.7,154.8" fill="none" stroke="#667" stroke-width="0.5"/><polyline points="423.6,235.0 409.9,354.1" fill="none" stroke="#777" stroke-width="0.5"/><polyline points="527.8,230.0 521.6,290.8 594.8,298.2" fill="none" stroke="#9a9a9a" stroke-width="0.6"/><polyline points="613.4,288.3 649.4,291.3" fill="none" stroke="#7fa9b8" stroke-width="0.5"/><polyline points="615.9,289.6 608.4,359.0" fill="none" stroke="#7fa9b8" stroke-width="0.5"/><polyline points="588.6,359.0 618.4,361.5 619.6,351.6 638.2,352.8 639.5,345.4 649.4,346.6" fill="none" stroke="#7fa9b8" stroke-width="0.5"/><polyline points="655.1,331.7 659.3,330.5 660.5,324.3 666.7,323.1" fill="none" stroke="#7fa9b8" stroke-width="0.5"/><polyline points="607.2,362.8 603.5,408.7" fill="none" stroke="#7fa9b8" stroke-width="0.5"/><polyline points="597.3,465.9 582.4,620.0" fill="none" stroke="#9a9a9a" stroke-width="0.6"/><polyline points="540.2,472.6 700.3,488.3" fill="none" stroke="#9a9a9a" stroke-width="0.6" stroke-dasharray="3 .6"/><polyline points="701.9,104.3 805.7,114.2" fill="none" stroke="#8f8f8f" stroke-width="0.6" stroke-dasharray="3 .6"/><polyline points="830.4,75.6 805.7,114.2 733.8,241.5 733.8,250.0 701.9,440.0 703.1,440.0 698.4,475.4 700.3,488.3 725.0,619.2" fill="none" stroke="#9c9c9c" stroke-width="0.65"/><polyline points="469.5,464.7 535.2,470.9" fill="none" stroke="#b9905a" stroke-width="0.5"/><polyline points="472.0,496.9 467.0,561.4" fill="none" stroke="#b9905a" stroke-width="0.5"/><polyline points="472.0,496.9 527.8,501.9" fill="none" stroke="#b9905a" stroke-width="0.5"/><polyline points="478.2,434.9 474.4,464.7" fill="none" stroke="#b9905a" stroke-width="0.5"/><polyline points="534.0,446.1 531.5,470.9" fill="none" stroke="#b9905a" stroke-width="0.5"/><polyline points="524.1,503.1 519.1,566.4 465.8,560.9" fill="none" stroke="#b9905a" stroke-width="0.5"/><polyline points="421.1,588.7 419.9,593.7 437.2,594.9 434.7,607.3 419.9,606.1" fill="none" stroke="#6c7048" stroke-width="0.5"/><polyline points="165.4,250.0 170.1,264.1 173.6,280.6 172.4,308.9 170.1,356.1 167.7,440.0" fill="none" stroke="#8c8c8c" stroke-width="0.6" stroke-dasharray="4 1"/><polyline points="254.4,278.0 283.6,281.5 280.7,309.0" fill="none" stroke="#8a8a8a" stroke-width="0.5"/><polyline points="399.0,480.0 386.0,618.0" fill="none" stroke="#777" stroke-width="0.5"/><polyline points="450.0,462.2 468.6,464.0 539.3,472.1" fill="none" stroke="#b9976f" stroke-width="0.55"/><polyline points="468.6,464.0 466.7,483.3 490.9,486.4 492.8,468.4" fill="none" stroke="#b9976f" stroke-width="0.55"/><polyline points="463.6,446.7 462.4,462.8" fill="none" stroke="#b9976f" stroke-width="0.55"/><polyline points="470.5,451.6 469.2,464.0" fill="none" stroke="#b9976f" stroke-width="0.55"/><polyline points="470.5,451.6 477.3,452.2 479.8,433.6" fill="none" stroke="#b9976f" stroke-width="0.55"/><polyline points="534.3,420.0 532.5,446.0 555.4,448.5" fill="none" stroke="#b9976f" stroke-width="0.55"/><polyline points="532.5,446.0 529.4,470.9" fill="none" stroke="#b9976f" stroke-width="0.55"/><polyline points="492.8,468.4 521.9,471.5 521.3,477.1 528.1,477.7 527.5,484.5" fill="none" stroke="#b9976f" stroke-width="0.55"/><polyline points="512.0,476.4 510.8,487.6" fill="none" stroke="#b9976f" stroke-width="0.55"/><polyline points="493.4,487.6 492.2,493.2" fill="none" stroke="#b9976f" stroke-width="0.55"/><polyline points="471.1,497.5 468.6,520.0" fill="none" stroke="#b9976f" stroke-width="0.55"/><polyline points="471.1,497.5 499.6,500.6" fill="none" stroke="#b9976f" stroke-width="0.55"/><polyline points="531.9,505.6 530.6,511.8 535.6,512.4" fill="none" stroke="#b9976f" stroke-width="0.55"/><polyline points="211.9,356.7 209.6,377.9" fill="none" stroke="#b9976f" stroke-width="0.55"/><polyline points="272.2,354.5 270.5,382.4" fill="none" stroke="#b9976f" stroke-width="0.55"/><polyline points="259.3,385.7 286.1,388.5 285.0,399.1 288.4,399.7" fill="none" stroke="#b9976f" stroke-width="0.55"/><polyline points="187.9,411.4 214.7,415.3 215.2,413.6 241.5,415.9 242.6,412.5" fill="none" stroke="#b9976f" stroke-width="0.55"/><polyline points="209.6,419.2 208.0,430.4" fill="none" stroke="#b9976f" stroke-width="0.55"/><polyline points="253.2,402.5 253.7,410.3 258.2,410.9" fill="none" stroke="#b9976f" stroke-width="0.55"/><polyline points="208.9,266.3 207.8,285.0" fill="none" stroke="#b9976f" stroke-width="0.55"/><polyline points="218.3,266.3 217.1,285.0" fill="none" stroke="#b9976f" stroke-width="0.55"/><polyline points="201.3,285.6 217.1,285.0" fill="none" stroke="#b9976f" stroke-width="0.55"/><text x="220.6" y="251.8" font-size="5.8" font-weight="bold" fill="#0a0a0a" stroke="#0a0a0a" stroke-width=".5" text-anchor="middle" font-family="Liberation Sans" textLength="20.3" lengthAdjust="spacingAndGlyphs">SYGNA</text><text x="255.3" y="250.8" font-size="5.8" font-weight="bold" fill="#0a0a0a" stroke="#0a0a0a" stroke-width=".5" text-anchor="middle" font-family="Liberation Sans" textLength="24.4" lengthAdjust="spacingAndGlyphs">SNORRE</text><text x="209.4" y="261.8" font-size="5.8" font-weight="bold" fill="#0a0a0a" stroke="#0a0a0a" stroke-width=".5" text-anchor="middle" font-family="Liberation Sans" textLength="56.8" lengthAdjust="spacingAndGlyphs">STATFJORD NORD</text><text x="170.9" y="270.0" font-size="5.8" font-weight="bold" fill="#0a0a0a" stroke="#0a0a0a" stroke-width=".5" text-anchor="middle" font-family="Liberation Sans" textLength="36.5" lengthAdjust="spacingAndGlyphs">MURCHISON</text><text x="232.5" y="292.3" font-size="5.8" font-weight="bold" fill="#0a0a0a" stroke="#0a0a0a" stroke-width=".5" text-anchor="middle" font-family="Liberation Sans" textLength="24.4" lengthAdjust="spacingAndGlyphs">VIGDIS</text><text x="214.4" y="304.7" font-size="5.8" font-weight="bold" fill="#0a0a0a" stroke="#0a0a0a" stroke-width=".5" text-anchor="middle" font-family="Liberation Sans" textLength="52.8" lengthAdjust="spacingAndGlyphs">STATFJORD ØST</text><text x="233.0" y="325.0" font-size="5.8" font-weight="bold" fill="#0a0a0a" stroke="#0a0a0a" stroke-width=".5" text-anchor="middle" font-family="Liberation Sans" textLength="24.4" lengthAdjust="spacingAndGlyphs">TORDIS</text><text x="186.6" y="325.8" font-size="5.8" font-weight="bold" fill="#0a0a0a" stroke="#0a0a0a" stroke-width=".5" text-anchor="middle" font-family="Liberation Sans" textLength="36.5" lengthAdjust="spacingAndGlyphs">STATFJORD</text><text x="311.1" y="299.7" font-size="5.8" font-weight="bold" fill="#0a0a0a" stroke="#0a0a0a" stroke-width=".5" text-anchor="middle" font-family="Liberation Sans" textLength="24.4" lengthAdjust="spacingAndGlyphs">VOLUND</text><text x="280.1" y="330.7" font-size="5.8" font-weight="bold" fill="#0a0a0a" stroke="#0a0a0a" stroke-width=".5" text-anchor="middle" font-family="Liberation Sans" textLength="40.6" lengthAdjust="spacingAndGlyphs">VOLUND SØR</text><text x="278.9" y="345.1" font-size="5.8" font-weight="bold" fill="#0a0a0a" stroke="#0a0a0a" stroke-width=".5" text-anchor="middle" font-family="Liberation Sans" textLength="20.3" lengthAdjust="spacingAndGlyphs">GIMLE</text><text x="246.6" y="364.2" font-size="5.8" font-weight="bold" fill="#0a0a0a" stroke="#0a0a0a" stroke-width=".5" text-anchor="middle" font-family="Liberation Sans" textLength="32.5" lengthAdjust="spacingAndGlyphs">GULLFAKS</text><text x="221.8" y="398.2" font-size="5.8" font-weight="bold" fill="#0a0a0a" stroke="#0a0a0a" stroke-width=".5" text-anchor="middle" font-family="Liberation Sans" textLength="48.7" lengthAdjust="spacingAndGlyphs">GULLFAKS SØR</text><text x="303.7" y="412.1" font-size="5.8" font-weight="bold" fill="#0a0a0a" stroke="#0a0a0a" stroke-width=".5" text-anchor="middle" font-family="Liberation Sans" textLength="40.6" lengthAdjust="spacingAndGlyphs">KVITEBJØRN</text><text x="261.5" y="426.8" font-size="5.8" font-weight="bold" fill="#0a0a0a" stroke="#0a0a0a" stroke-width=".5" text-anchor="middle" font-family="Liberation Sans" textLength="28.4" lengthAdjust="spacingAndGlyphs">VALEMON</text><text x="316.1" y="504.9" font-size="5.8" font-weight="bold" fill="#0a0a0a" stroke="#0a0a0a" stroke-width=".5" text-anchor="middle" font-family="Liberation Sans" textLength="24.4" lengthAdjust="spacingAndGlyphs">HULDRA</text><text x="364.5" y="538.4" font-size="5.8" font-weight="bold" fill="#0a0a0a" stroke="#0a0a0a" stroke-width=".5" text-anchor="middle" font-family="Liberation Sans" textLength="40.6" lengthAdjust="spacingAndGlyphs">VESLEFRIKK</text><text x="370.7" y="573.1" font-size="5.8" font-weight="bold" fill="#0a0a0a" stroke="#0a0a0a" stroke-width=".5" text-anchor="middle" font-family="Liberation Sans" textLength="44.7" lengthAdjust="spacingAndGlyphs">OSEBERG ØST</text><text x="159.3" y="599.2" font-size="5.8" font-weight="bold" fill="#0a0a0a" stroke="#0a0a0a" stroke-width=".5" text-anchor="middle" font-family="Liberation Sans" textLength="16.2" lengthAdjust="spacingAndGlyphs">GYDA</text><text x="173.4" y="617.8" font-size="5.8" font-weight="bold" fill="#0a0a0a" stroke="#0a0a0a" stroke-width=".5" text-anchor="middle" font-family="Liberation Sans" textLength="48.7" lengthAdjust="spacingAndGlyphs">MARTIN LINGE</text><text x="489.3" y="370.4" font-size="5.8" font-weight="bold" fill="#0a0a0a" stroke="#0a0a0a" stroke-width=".5" text-anchor="middle" font-family="Liberation Sans" textLength="16.2" lengthAdjust="spacingAndGlyphs">VEGA</text><text x="543.4" y="366.7" font-size="5.8" font-weight="bold" fill="#0a0a0a" stroke="#0a0a0a" stroke-width=".5" text-anchor="middle" font-family="Liberation Sans" textLength="16.2" lengthAdjust="spacingAndGlyphs">NOVA</text><text x="630.3" y="327.5" font-size="5.8" font-weight="bold" fill="#0a0a0a" stroke="#0a0a0a" stroke-width=".5" text-anchor="middle" font-family="Liberation Sans" textLength="16.2" lengthAdjust="spacingAndGlyphs">DUVA</text><text x="605.5" y="343.9" font-size="5.8" font-weight="bold" fill="#0a0a0a" stroke="#0a0a0a" stroke-width=".5" text-anchor="middle" font-family="Liberation Sans" textLength="16.2" lengthAdjust="spacingAndGlyphs">GJØA</text><text x="510.4" y="408.9" font-size="5.8" font-weight="bold" fill="#0a0a0a" stroke="#0a0a0a" stroke-width=".5" text-anchor="middle" font-family="Liberation Sans" textLength="28.4" lengthAdjust="spacingAndGlyphs">BYRDING</text><text x="504.2" y="427.5" font-size="5.8" font-weight="bold" fill="#0a0a0a" stroke="#0a0a0a" stroke-width=".5" text-anchor="middle" font-family="Liberation Sans" textLength="44.7" lengthAdjust="spacingAndGlyphs">FRAM H-NORD</text><text x="504.2" y="459.2" font-size="5.8" font-weight="bold" fill="#0a0a0a" stroke="#0a0a0a" stroke-width=".5" text-anchor="middle" font-family="Liberation Sans" textLength="16.2" lengthAdjust="spacingAndGlyphs">FRAM</text><text x="504.2" y="499.2" font-size="5.8" font-weight="bold" fill="#0a0a0a" stroke="#0a0a0a" stroke-width=".5" text-anchor="middle" font-family="Liberation Sans" textLength="52.8" lengthAdjust="spacingAndGlyphs">TROLL BRENT B</text><text x="526.6" y="573.3" font-size="5.8" font-weight="bold" fill="#0a0a0a" stroke="#0a0a0a" stroke-width=".5" text-anchor="middle" font-family="Liberation Sans" textLength="20.3" lengthAdjust="spacingAndGlyphs">TROLL</text></g></g></svg><div class="abs" style="left:141px;top:70.8px;width:64px;height:18.200000000000003px;background:#0c0c0d;border:1px solid #3c3c3e;border-radius:1.500px;"></div>
<svg class="abs" style="left:146.20px;top:76.40px" width="7" height="7" viewBox="0 0 7 7"><circle cx="3.500" cy="3.500" r="2.650" fill="#0a1420" stroke="#3490d8" stroke-width="1.200"/></svg>
<div class="t" id="t6" style="top:75.76px;font-size:9.2px;color:#f2f2f2;-webkit-text-stroke:.22px;left:158.90px;transform:scaleX(0.9129);">Nordsjøen</div>
<div class="abs" style="left:1026px;top:77.7px;width:20.200000000000045px;height:20.099999999999994px;background:#222224;border-radius:2px 0 0 2px;"></div>
<div class="abs" style="left:1046.9px;top:77.7px;width:35.09999999999991px;height:20.099999999999994px;background:#222224;"></div>
<div class="abs" style="left:1082.7px;top:77.7px;width:20.299999999999955px;height:20.099999999999994px;background:#222224;border-radius:0 2px 2px 0;"></div>
<div class="abs" style="left:1113.4px;top:77.7px;width:20.59999999999991px;height:20.099999999999994px;background:#222224;border-radius:2px;"></div>
<div class="abs" style="left:1032.6px;top:87.3px;width:7.2000000000000455px;height:0.9000000000000057px;background:#e6e6e6;"></div>
<div class="abs" style="left:1089.3px;top:87.3px;width:7.2000000000000455px;height:0.9000000000000057px;background:#e6e6e6;"></div>
<div class="abs" style="left:1092.45px;top:84.15px;width:0.8999999999998636px;height:7.199999999999989px;background:#e6e6e6;"></div>
<div class="t" id="t7" style="top:83.66px;font-size:7.2px;color:#f2f2f2;font-weight:bold;left:1055.20px;transform:scaleX(1.0223);">143%</div>
<svg class="abs" style="left:1119.30px;top:83.30px" width="9" height="9" viewBox="0 0 9 9"><path d="M5.300 3.700 8.200 .8M5.900 .7H8.300V3.100M3.700 5.300 .8 8.200M.7 5.900V8.300H3.100" fill="none" stroke="#e6e6e6" stroke-width=".9"/></svg>
<div class="abs" style="left:842.2px;top:108.6px;width:290.0px;height:1.0px;background:#2e2e30;"></div>
<svg class="abs" style="left:842.50px;top:116.30px" width="14" height="14" viewBox="0 0 14 14"><defs><clipPath id="av2"><circle cx="7" cy="7" r="7"/></clipPath></defs><g clip-path="url(#av2)"><rect width="14" height="14" fill="#5a2f22"/><ellipse cx="7" cy="6.300" rx="3.600" ry="4.800" fill="#1c0f0c"/><ellipse cx="7" cy="5.600" rx="1.900" ry="2.400" fill="#d9a98c"/><path d="M1.500 14c.5-3.600 2.800-4.600 5.500-4.600s5 1 5.500 4.600z" fill="#0d0d10"/></g></svg>
<div class="t" id="t8" style="top:119.35px;font-size:9px;color:#f2f2f2;-webkit-text-stroke:.22px;left:862.30px;transform:scaleX(0.9451);">Areas you control</div>
<div class="abs" style="left:1008.2px;top:115.5px;width:124.0px;height:15.599999999999994px;background:#161618;border-radius:1.500px;"></div>
<div class="t" id="t9" style="top:120.19px;font-size:6.9px;color:#c9c9cc;left:1012.30px;transform:scaleX(1.0319);">Logged in as Administrator</div>
<div class="abs" style="left:1118.4px;top:118.3px;width:10.399999999999864px;height:10.000000000000014px;background:#0a0a0b;border-radius:1.500px;"></div>
<svg class="abs" style="left:1120.80px;top:121.65px" width="5.6" height="3.5" viewBox="0 0 5.6 3.5"><path d="M.5 .6 2.800 2.900 5.100 .6" fill="none" stroke="#c8c8c8" stroke-width=".8"/></svg>
<div class="abs" style="left:842.2px;top:137.6px;width:290.0px;height:118.0px;background:#4b4e52;"></div>
<div class="abs" style="left:843px;top:138.4px;width:288.4000000000001px;height:38.29999999999998px;background:#2c2f33;"></div>
<svg class="abs" style="left:849.55px;top:144.65px" width="8.5" height="8.5" viewBox="0 0 8.5 8.5"><rect x="0" y="0" width="3.900" height="3.900" fill="#9a9a9c"/><rect x="0" y="4.6" width="3.900" height="3.900" fill="#9a9a9c"/><rect x="4.6" y="0" width="3.900" height="3.900" fill="#9a9a9c"/><rect x="4.6" y="4.6" width="3.900" height="3.900" fill="#9a9a9c"/></svg>
<div class="t" id="t10" style="top:145.86px;font-size:7.2px;color:#e8e8e8;left:862.30px;transform:scaleX(1.0343);">Statfjord</div>
<div class="t" id="t11" style="top:146.13px;font-size:6.6px;color:#c0c2c6;left:1107.40px;transform:scaleX(0.9719);">100%</div>
<div class="abs" style="left:849.5px;top:159.5px;width:101.60000000000002px;height:12.800000000000011px;background:#0a7bff;border-radius:6.400px;box-shadow:0 0 0 .6px #1a120c;"></div>
<div class="t" id="t12" style="top:163.12px;font-size:6.4px;color:#fff;left:855.20px;transform:scaleX(0.9891);">Total emission of 12,531 kg CO₂</div>
<div class="abs" style="left:843px;top:177.5px;width:288.4000000000001px;height:38.30000000000001px;background:#18181a;"></div>
<svg class="abs" style="left:849.55px;top:183.75px" width="8.5" height="8.5" viewBox="0 0 8.5 8.5"><rect x="0" y="0" width="3.900" height="3.900" fill="#9a9a9c"/><rect x="0" y="4.6" width="3.900" height="3.900" fill="#9a9a9c"/><rect x="4.6" y="0" width="3.900" height="3.900" fill="#9a9a9c"/><rect x="4.6" y="4.6" width="3.900" height="3.900" fill="#9a9a9c"/></svg>
<div class="t" id="t13" style="top:184.96px;font-size:7.2px;color:#e8e8e8;left:862.30px;transform:scaleX(0.9825);">Snorre</div>
<div class="t" id="t14" style="top:185.23px;font-size:6.6px;color:#c0c2c6;left:1107.40px;transform:scaleX(0.9719);">100%</div>
<div class="abs" style="left:849.5px;top:198.6px;width:97.70000000000005px;height:12.800000000000011px;background:#0a7bff;border-radius:6.400px;box-shadow:0 0 0 .6px #1a120c;"></div>
<div class="t" id="t15" style="top:202.22px;font-size:6.4px;color:#fff;left:855.20px;transform:scaleX(0.9848);">Total emission of 9,151 kg CO₂</div>
<div class="abs" style="left:843px;top:216.60000000000002px;width:288.4000000000001px;height:38.30000000000001px;background:#2c2f33;"></div>
<svg class="abs" style="left:849.55px;top:222.85px" width="8.5" height="8.5" viewBox="0 0 8.5 8.5"><rect x="0" y="0" width="3.900" height="3.900" fill="#9a9a9c"/><rect x="0" y="4.6" width="3.900" height="3.900" fill="#9a9a9c"/><rect x="4.6" y="0" width="3.900" height="3.900" fill="#9a9a9c"/><rect x="4.6" y="4.6" width="3.900" height="3.900" fill="#9a9a9c"/></svg>
<div class="t" id="t16" style="top:224.06px;font-size:7.2px;color:#e8e8e8;left:862.30px;transform:scaleX(0.9897);">Gullfaks</div>
<div class="t" id="t17" style="top:224.33px;font-size:6.6px;color:#c0c2c6;left:1107.40px;transform:scaleX(0.9719);">100%</div>
<div class="abs" style="left:849.5px;top:237.70000000000002px;width:99.0px;height:12.800000000000011px;background:#0a7bff;border-radius:6.400px;box-shadow:0 0 0 .6px #1a120c;"></div>
<div class="t" id="t18" style="top:241.32px;font-size:6.4px;color:#fff;left:855.20px;transform:scaleX(0.9996);">Total emission of 4,331 kg CO₂</div>
<div class="abs" style="left:842.2px;top:384.3px;width:289.5px;height:216.7px;background:#151618;border-radius:3px;"></div>
<div class="t" id="t19" style="top:399.93px;font-size:12.6px;color:#fff;font-weight:bold;left:859.70px;transform:scaleX(0.9659);">Data Quality Audit</div>
<div class="abs" style="left:859.2px;top:421.1px;width:255.5999999999999px;height:52.19999999999999px;background:#3a3a3a;border-radius:2px;"></div>
<div class="t" id="t20" style="top:429.07px;font-size:9.4px;color:#a9b0c2;-webkit-text-stroke:.22px;left:866.20px;transform:scaleX(1.0465);">Data Quality Audits check the datasets you can see</div>
<div class="t" id="t21" style="top:441.87px;font-size:9.4px;color:#a9b0c2;-webkit-text-stroke:.22px;left:866.20px;transform:scaleX(1.0687);">and suggest opportunities to improve the quality.</div>
<div class="t" id="t22" style="top:462.01px;font-size:8.2px;color:#a5c8ee;left:866.20px;transform:scaleX(0.9982);">Learn More</div>
<svg class="abs" style="left:913.45px;top:462.35px" width="5.5" height="5.5" viewBox="0 0 5.5 5.5"><path d="M.6 4.900 4.700 .8M1.500 .7H4.800V4" fill="none" stroke="#a5c8ee" stroke-width=".8"/></svg>
<div class="t" id="t23" style="top:462.01px;font-size:8.2px;color:#9a9fa8;left:1078.70px;transform:scaleX(1.0085);">Dismiss</div>
<div class="abs" style="left:859.2px;top:490.4px;width:6.699999999999932px;height:6.600000000000023px;background:#e8e8e8;"></div>
<div class="t" id="t24" style="top:490.28px;font-size:7.6px;color:#e8e8e8;left:870.00px;">2</div>
<svg class="abs" style="left:879.45px;top:490.25px" width="7.5" height="6.5" viewBox="0 0 7.5 6.5"><path d="M3.750 .2 7.300 6.300H.2z" fill="#f0f0f0"/></svg>
<div class="t" id="t25" style="top:490.28px;font-size:7.6px;color:#e8e8e8;left:889.50px;">3</div>
<svg class="abs" style="left:899.90px;top:490.40px" width="6.6" height="6.6" viewBox="0 0 6.6 6.6"><circle cx="3.300" cy="3.300" r="3.300" fill="#6a6a6c"/></svg>
<div class="t" id="t26" style="top:490.28px;font-size:7.6px;color:#6e6e70;left:910.00px;">0</div>
<div class="abs" style="left:863px;top:505.8px;width:7px;height:6.499999999999943px;background:#e6404c;"></div>
<div class="t" id="t27" style="top:505.90px;font-size:8px;color:#f2f2f2;left:873.20px;transform:scaleX(1.0183);">>10% implausible values on Snorre and Gullfaks (2)</div>
<svg class="abs" style="left:863.30px;top:523.80px" width="8" height="7" viewBox="0 0 8 7"><path d="M4 .2 7.800 6.800H.2z" fill="#f2c500"/></svg>
<div class="t" id="t28" style="top:524.00px;font-size:8px;color:#f2f2f2;left:873.70px;transform:scaleX(1.0647);">Accuracy under threshold on Statfjord (3)</div>
<div class="t" id="t29" style="top:541.35px;font-size:9px;color:#fff;font-weight:bold;left:859.70px;transform:scaleX(1.0244);">Passed</div>
<svg class="abs" style="left:865.00px;top:562.40px" width="7.2" height="6" viewBox="0 0 7.2 6"><path d="M.5 3.300 2.600 5.400 6.700 .6" fill="none" stroke="#4fae72" stroke-width=".9"/></svg>
<div class="t" id="t30" style="top:561.90px;font-size:8px;color:#f2f2f2;left:876.00px;transform:scaleX(1.0605);">No duplicates found</div>
<svg class="abs" style="left:865.00px;top:580.70px" width="7.2" height="6" viewBox="0 0 7.2 6"><path d="M.5 3.300 2.600 5.400 6.700 .6" fill="none" stroke="#4fae72" stroke-width=".9"/></svg>
<div class="t" id="t31" style="top:580.20px;font-size:8px;color:#f2f2f2;left:876.00px;transform:scaleX(1.0472);">Data up to date</div><div class="abs" style="left:135px;top:620px;width:1017px;height:151px;background:#242428;"></div>
<div class="abs" style="left:135px;top:620px;width:1017px;height:14.5px;background:#2a2a2c;"></div>
<div class="abs" style="left:135px;top:771px;width:1017px;height:16px;background:#282828;"></div>
<svg class="abs" style="left:0;top:0" width="1500" height="806"><defs><linearGradient id="acg" x1="0" y1="0" x2="1" y2="0"><stop offset="0" stop-color="#1e6a44"/><stop offset=".3" stop-color="#275e46"/><stop offset=".62" stop-color="#2b3133"/><stop offset="1" stop-color="#2a2e30"/></linearGradient><linearGradient id="acr" x1="0" y1="0" x2="1" y2="0"><stop offset="0" stop-color="#a64749"/><stop offset=".3" stop-color="#8e4246"/><stop offset=".62" stop-color="#2b3133"/><stop offset="1" stop-color="#2a2e30"/></linearGradient><linearGradient id="acy" x1="0" y1="0" x2="1" y2="0"><stop offset="0" stop-color="#7a5a1b"/><stop offset=".3" stop-color="#6e5520"/><stop offset=".62" stop-color="#2b3133"/><stop offset="1" stop-color="#2a2e30"/></linearGradient></defs><rect x="1075" y="635.20" width="76" height="12.100" fill="url(#acg)"/><rect x="1075" y="648.30" width="76" height="12.100" fill="url(#acg)"/><rect x="1075" y="661.40" width="76" height="12.100" fill="url(#acr)"/><rect x="1075" y="674.50" width="76" height="12.100" fill="url(#acg)"/><rect x="1075" y="687.60" width="76" height="12.100" fill="url(#acr)"/><rect x="1075" y="700.70" width="76" height="12.100" fill="url(#acg)"/><rect x="1075" y="713.80" width="76" height="12.100" fill="url(#acy)"/><rect x="1075" y="726.90" width="76" height="12.100" fill="url(#acg)"/><rect x="1075" y="740.00" width="76" height="12.100" fill="url(#acr)"/><rect x="1075" y="753.10" width="76" height="12.100" fill="url(#acy)"/><rect x="133.2" y="620" width="1" height="146" fill="#333338"/><rect x="193.2" y="620" width="1" height="146" fill="#333338"/><rect x="273.2" y="620" width="1" height="146" fill="#333338"/><rect x="353.2" y="620" width="1" height="146" fill="#333338"/><rect x="433.2" y="620" width="1" height="146" fill="#333338"/><rect x="513.2" y="620" width="1" height="146" fill="#333338"/><rect x="593.2" y="620" width="1" height="146" fill="#333338"/><rect x="673.2" y="620" width="1" height="146" fill="#333338"/><rect x="753.2" y="620" width="1" height="146" fill="#333338"/><rect x="833.2" y="620" width="1" height="146" fill="#333338"/><rect x="913.2" y="620" width="1" height="146" fill="#333338"/><rect x="993.2" y="620" width="1" height="146" fill="#333338"/><rect x="1073.2" y="620" width="1" height="146" fill="#333338"/><rect x="1151" y="620" width="1" height="152" fill="#333338"/><rect x="134" y="619.500" width="1018" height="1" fill="#333338"/><rect x="134" y="634.20" width="1018" height="1" fill="#333338"/><rect x="134" y="647.30" width="1018" height="1" fill="#333338"/><rect x="134" y="660.40" width="1018" height="1" fill="#333338"/><rect x="134" y="673.50" width="1018" height="1" fill="#333338"/><rect x="134" y="686.60" width="1018" height="1" fill="#333338"/><rect x="134" y="699.70" width="1018" height="1" fill="#333338"/><rect x="134" y="712.80" width="1018" height="1" fill="#333338"/><rect x="134" y="725.90" width="1018" height="1" fill="#333338"/><rect x="134" y="739.00" width="1018" height="1" fill="#333338"/><rect x="134" y="752.10" width="1018" height="1" fill="#333338"/><rect x="134" y="765.20" width="1018" height="1" fill="#333338"/><rect x="134" y="771" width="1018" height="1" fill="#3a3a3e"/></svg>
<div class="t" id="t32" style="top:623.80px;font-size:8px;color:#8d92cc;left:139.80px;transform:scaleX(1.0851);">Cluster</div>
<div class="t" id="t33" style="top:623.80px;font-size:8px;color:#8d92cc;left:199.80px;transform:scaleX(1.0063);">Value</div>
<div class="t" id="t34" style="top:623.80px;font-size:8px;color:#8d92cc;left:279.80px;transform:scaleX(1.0419);">From Dataset</div>
<div class="t" id="t35" style="top:623.80px;font-size:8px;color:#8d92cc;left:359.80px;transform:scaleX(1.0996);">Description</div>
<div class="t" id="t36" style="top:623.80px;font-size:8px;color:#8d92cc;left:439.80px;transform:scaleX(1.0187);">Unit</div>
<div class="t" id="t37" style="top:623.80px;font-size:8px;color:#8d92cc;left:519.80px;transform:scaleX(1.0203);">Year</div>
<div class="t" id="t38" style="top:623.80px;font-size:8px;color:#8d92cc;left:599.80px;transform:scaleX(1.0253);">Source</div>
<div class="t" id="t39" style="top:623.80px;font-size:8px;color:#8d92cc;left:679.80px;transform:scaleX(1.0602);">Emission Type</div>
<div class="t" id="t40" style="top:623.80px;font-size:8px;color:#8d92cc;left:759.80px;transform:scaleX(0.9357);">-</div>
<div class="t" id="t41" style="top:623.80px;font-size:8px;color:#8d92cc;left:839.80px;transform:scaleX(0.9357);">-</div>
<div class="t" id="t42" style="top:623.80px;font-size:8px;color:#8d92cc;left:919.80px;transform:scaleX(1.1241);">Verified</div>
<div class="t" id="t43" style="top:623.80px;font-size:8px;color:#8d92cc;left:999.80px;transform:scaleX(1.1244);">Plausibility</div>
<div class="t" id="t44" style="top:623.80px;font-size:8px;color:#8d92cc;left:1079.80px;transform:scaleX(1.0788);">Accuracy</div>
<div class="t" id="t45" style="top:637.62px;font-size:7.3px;color:#d6d6d8;left:140.00px;">Activity 1</div>
<div class="t" id="t46" style="top:637.62px;font-size:7.3px;color:#d6d6d8;left:200.00px;">533.72</div>
<div class="t" id="t47" style="top:637.62px;font-size:7.3px;color:#d6d6d8;left:280.00px;transform:scaleX(0.9628);">DrillingData.csv</div>
<div class="t" id="t48" style="top:637.62px;font-size:7.3px;color:#d6d6d8;left:360.00px;">Flaring</div>
<div class="t" id="t49" style="top:637.62px;font-size:7.3px;color:#d6d6d8;left:440.00px;">Tons</div>
<div class="t" id="t50" style="top:637.62px;font-size:7.3px;color:#d6d6d8;left:520.00px;">2024</div>
<div class="t" id="t51" style="top:637.62px;font-size:7.3px;color:#d6d6d8;left:600.00px;">EPA</div>
<div class="t" id="t52" style="top:637.62px;font-size:7.3px;color:#d6d6d8;left:680.00px;">CO2</div>
<div class="t" id="t53" style="top:637.62px;font-size:7.3px;color:#d6d6d8;left:760.00px;">-</div>
<div class="t" id="t54" style="top:637.62px;font-size:7.3px;color:#d6d6d8;left:840.00px;">-</div>
<div class="t" id="t55" style="top:637.62px;font-size:7.3px;color:#d6d6d8;left:920.00px;">Yes</div>
<div class="t" id="t56" style="top:637.62px;font-size:7.3px;color:#d6d6d8;left:1000.00px;">Yes</div>
<div class="t" id="t57" style="top:637.62px;font-size:7.3px;color:#f0f0f0;font-weight:bold;left:1079.60px;">94%</div>
<svg class="abs" style="left:331.50px;top:638.80px" width="3.6" height="3.6" viewBox="0 0 3.6 3.6"><path d="M1.300 .4H.4V3.200H3.200V2.300M2 .4H3.200V1.600M3.200 .4 1.700 1.900" fill="none" stroke-width=".55" stroke="#c0c0c4"/></svg>
<svg class="abs" style="left:1096.70px;top:638.80px" width="3.6" height="3.6" viewBox="0 0 3.6 3.6"><path d="M1.300 .4H.4V3.200H3.200V2.300M2 .4H3.200V1.600M3.200 .4 1.700 1.900" fill="none" stroke-width=".55" stroke="#c8d8d0"/></svg>
<div class="t" id="t58" style="top:650.72px;font-size:7.3px;color:#d6d6d8;left:140.00px;">Activity 1</div>
<div class="t" id="t59" style="top:650.72px;font-size:7.3px;color:#d6d6d8;left:200.00px;">901.16</div>
<div class="t" id="t60" style="top:650.72px;font-size:7.3px;color:#d6d6d8;left:280.00px;transform:scaleX(0.9628);">DrillingData.csv</div>
<div class="t" id="t61" style="top:650.72px;font-size:7.3px;color:#d6d6d8;left:360.00px;">Flaring</div>
<div class="t" id="t62" style="top:650.72px;font-size:7.3px;color:#d6d6d8;left:440.00px;">Tons</div>
<div class="t" id="t63" style="top:650.72px;font-size:7.3px;color:#d6d6d8;left:520.00px;">2024</div>
<div class="t" id="t64" style="top:650.72px;font-size:7.3px;color:#d6d6d8;left:600.00px;">EPA</div>
<div class="t" id="t65" style="top:650.72px;font-size:7.3px;color:#d6d6d8;left:680.00px;">CH4</div>
<div class="t" id="t66" style="top:650.72px;font-size:7.3px;color:#d6d6d8;left:760.00px;">-</div>
<div class="t" id="t67" style="top:650.72px;font-size:7.3px;color:#d6d6d8;left:840.00px;">-</div>
<div class="t" id="t68" style="top:650.72px;font-size:7.3px;color:#d6d6d8;left:920.00px;">No</div>
<div class="t" id="t69" style="top:650.72px;font-size:7.3px;color:#d6d6d8;left:1000.00px;">Yes</div>
<div class="t" id="t70" style="top:650.72px;font-size:7.3px;color:#f0f0f0;font-weight:bold;left:1079.60px;">72%</div>
<svg class="abs" style="left:331.50px;top:651.90px" width="3.6" height="3.6" viewBox="0 0 3.6 3.6"><path d="M1.300 .4H.4V3.200H3.200V2.300M2 .4H3.200V1.600M3.200 .4 1.700 1.900" fill="none" stroke-width=".55" stroke="#c0c0c4"/></svg>
<svg class="abs" style="left:1096.70px;top:651.90px" width="3.6" height="3.6" viewBox="0 0 3.6 3.6"><path d="M1.300 .4H.4V3.200H3.200V2.300M2 .4H3.200V1.600M3.200 .4 1.700 1.900" fill="none" stroke-width=".55" stroke="#c8d8d0"/></svg>
<div class="t" id="t71" style="top:663.82px;font-size:7.3px;color:#d6d6d8;left:140.00px;">Activity 1</div>
<div class="t" id="t72" style="top:663.82px;font-size:7.3px;color:#d6d6d8;left:200.00px;">313.12</div>
<div class="t" id="t73" style="top:663.82px;font-size:7.3px;color:#d6d6d8;left:280.00px;transform:scaleX(0.9628);">DrillingData.csv</div>
<div class="t" id="t74" style="top:663.82px;font-size:7.3px;color:#d6d6d8;left:360.00px;">Flaring</div>
<div class="t" id="t75" style="top:663.82px;font-size:7.3px;color:#d6d6d8;left:440.00px;">Tons</div>
<div class="t" id="t76" style="top:663.82px;font-size:7.3px;color:#d6d6d8;left:520.00px;">2024</div>
<div class="t" id="t77" style="top:663.82px;font-size:7.3px;color:#d6d6d8;left:600.00px;">EEA</div>
<div class="t" id="t78" style="top:663.82px;font-size:7.3px;color:#d6d6d8;left:680.00px;">SO2</div>
<div class="t" id="t79" style="top:663.82px;font-size:7.3px;color:#d6d6d8;left:760.00px;">-</div>
<div class="t" id="t80" style="top:663.82px;font-size:7.3px;color:#d6d6d8;left:840.00px;">-</div>
<div class="t" id="t81" style="top:663.82px;font-size:7.3px;color:#d6d6d8;left:920.00px;">No</div>
<div class="t" id="t82" style="top:663.82px;font-size:7.3px;color:#d6d6d8;left:1000.00px;">No</div>
<div class="t" id="t83" style="top:663.82px;font-size:7.3px;color:#f0f0f0;font-weight:bold;left:1079.60px;">22%</div>
<svg class="abs" style="left:331.50px;top:665.00px" width="3.6" height="3.6" viewBox="0 0 3.6 3.6"><path d="M1.300 .4H.4V3.200H3.200V2.300M2 .4H3.200V1.600M3.200 .4 1.700 1.900" fill="none" stroke-width=".55" stroke="#c0c0c4"/></svg>
<svg class="abs" style="left:1096.70px;top:665.00px" width="3.6" height="3.6" viewBox="0 0 3.6 3.6"><path d="M1.300 .4H.4V3.200H3.200V2.300M2 .4H3.200V1.600M3.200 .4 1.700 1.900" fill="none" stroke-width=".55" stroke="#c8d8d0"/></svg>
<div class="t" id="t84" style="top:676.92px;font-size:7.3px;color:#d6d6d8;left:140.00px;">Activity 1</div>
<div class="t" id="t85" style="top:676.92px;font-size:7.3px;color:#d6d6d8;left:200.00px;">233.12</div>
<div class="t" id="t86" style="top:676.92px;font-size:7.3px;color:#d6d6d8;left:280.00px;transform:scaleX(0.9628);">DrillingData.csv</div>
<div class="t" id="t87" style="top:676.92px;font-size:7.3px;color:#d6d6d8;left:360.00px;">Flaring</div>
<div class="t" id="t88" style="top:676.92px;font-size:7.3px;color:#d6d6d8;left:440.00px;">Tons</div>
<div class="t" id="t89" style="top:676.92px;font-size:7.3px;color:#d6d6d8;left:520.00px;">2024</div>
<div class="t" id="t90" style="top:676.92px;font-size:7.3px;color:#d6d6d8;left:600.00px;">EPA</div>
<div class="t" id="t91" style="top:676.92px;font-size:7.3px;color:#d6d6d8;left:680.00px;">N2O</div>
<div class="t" id="t92" style="top:676.92px;font-size:7.3px;color:#d6d6d8;left:760.00px;">-</div>
<div class="t" id="t93" style="top:676.92px;font-size:7.3px;color:#d6d6d8;left:840.00px;">-</div>
<div class="t" id="t94" style="top:676.92px;font-size:7.3px;color:#d6d6d8;left:920.00px;">No</div>
<div class="t" id="t95" style="top:676.92px;font-size:7.3px;color:#d6d6d8;left:1000.00px;">Yes</div>
<div class="t" id="t96" style="top:676.92px;font-size:7.3px;color:#f0f0f0;font-weight:bold;left:1079.60px;">84%</div>
<svg class="abs" style="left:331.50px;top:678.10px" width="3.6" height="3.6" viewBox="0 0 3.6 3.6"><path d="M1.300 .4H.4V3.200H3.200V2.300M2 .4H3.200V1.600M3.200 .4 1.700 1.900" fill="none" stroke-width=".55" stroke="#c0c0c4"/></svg>
<svg class="abs" style="left:1096.70px;top:678.10px" width="3.6" height="3.6" viewBox="0 0 3.6 3.6"><path d="M1.300 .4H.4V3.200H3.200V2.300M2 .4H3.200V1.600M3.200 .4 1.700 1.900" fill="none" stroke-width=".55" stroke="#c8d8d0"/></svg>
<div class="t" id="t97" style="top:690.02px;font-size:7.3px;color:#d6d6d8;left:140.00px;">Activity 1</div>
<div class="t" id="t98" style="top:690.02px;font-size:7.3px;color:#d6d6d8;left:200.00px;">341.17</div>
<div class="t" id="t99" style="top:690.02px;font-size:7.3px;color:#d6d6d8;left:280.00px;transform:scaleX(0.9628);">DrillingData.csv</div>
<div class="t" id="t100" style="top:690.02px;font-size:7.3px;color:#d6d6d8;left:360.00px;">Flaring</div>
<div class="t" id="t101" style="top:690.02px;font-size:7.3px;color:#d6d6d8;left:440.00px;">Tons</div>
<div class="t" id="t102" style="top:690.02px;font-size:7.3px;color:#d6d6d8;left:520.00px;">2024</div>
<div class="t" id="t103" style="top:690.02px;font-size:7.3px;color:#d6d6d8;left:600.00px;">EPA</div>
<div class="t" id="t104" style="top:690.02px;font-size:7.3px;color:#d6d6d8;left:680.00px;">NH3</div>
<div class="t" id="t105" style="top:690.02px;font-size:7.3px;color:#d6d6d8;left:760.00px;">-</div>
<div class="t" id="t106" style="top:690.02px;font-size:7.3px;color:#d6d6d8;left:840.00px;">-</div>
<div class="t" id="t107" style="top:690.02px;font-size:7.3px;color:#d6d6d8;left:920.00px;">No</div>
<div class="t" id="t108" style="top:690.02px;font-size:7.3px;color:#d6d6d8;left:1000.00px;">No</div>
<div class="t" id="t109" style="top:690.02px;font-size:7.3px;color:#f0f0f0;font-weight:bold;left:1079.60px;">34%</div>
<svg class="abs" style="left:331.50px;top:691.20px" width="3.6" height="3.6" viewBox="0 0 3.6 3.6"><path d="M1.300 .4H.4V3.200H3.200V2.300M2 .4H3.200V1.600M3.200 .4 1.700 1.900" fill="none" stroke-width=".55" stroke="#c0c0c4"/></svg>
<svg class="abs" style="left:1096.70px;top:691.20px" width="3.6" height="3.6" viewBox="0 0 3.6 3.6"><path d="M1.300 .4H.4V3.200H3.200V2.300M2 .4H3.200V1.600M3.200 .4 1.700 1.900" fill="none" stroke-width=".55" stroke="#c8d8d0"/></svg>
<div class="t" id="t110" style="top:703.12px;font-size:7.3px;color:#d6d6d8;left:140.00px;">Activity 1</div>
<div class="t" id="t111" style="top:703.12px;font-size:7.3px;color:#d6d6d8;left:200.00px;">341.92</div>
<div class="t" id="t112" style="top:703.12px;font-size:7.3px;color:#d6d6d8;left:280.00px;transform:scaleX(0.9628);">DrillingData.csv</div>
<div class="t" id="t113" style="top:703.12px;font-size:7.3px;color:#d6d6d8;left:360.00px;">Flaring</div>
<div class="t" id="t114" style="top:703.12px;font-size:7.3px;color:#d6d6d8;left:440.00px;">Tons</div>
<div class="t" id="t115" style="top:703.12px;font-size:7.3px;color:#d6d6d8;left:520.00px;">2024</div>
<div class="t" id="t116" style="top:703.12px;font-size:7.3px;color:#d6d6d8;left:600.00px;">EPA</div>
<div class="t" id="t117" style="top:703.12px;font-size:7.3px;color:#d6d6d8;left:680.00px;">CO2</div>
<div class="t" id="t118" style="top:703.12px;font-size:7.3px;color:#d6d6d8;left:760.00px;">-</div>
<div class="t" id="t119" style="top:703.12px;font-size:7.3px;color:#d6d6d8;left:840.00px;">-</div>
<div class="t" id="t120" style="top:703.12px;font-size:7.3px;color:#d6d6d8;left:920.00px;">Yes</div>
<div class="t" id="t121" style="top:703.12px;font-size:7.3px;color:#d6d6d8;left:1000.00px;">Yes</div>
<div class="t" id="t122" style="top:703.12px;font-size:7.3px;color:#f0f0f0;font-weight:bold;left:1079.60px;">95%</div>
<svg class="abs" style="left:331.50px;top:704.30px" width="3.6" height="3.6" viewBox="0 0 3.6 3.6"><path d="M1.300 .4H.4V3.200H3.200V2.300M2 .4H3.200V1.600M3.200 .4 1.700 1.900" fill="none" stroke-width=".55" stroke="#c0c0c4"/></svg>
<svg class="abs" style="left:1096.70px;top:704.30px" width="3.6" height="3.6" viewBox="0 0 3.6 3.6"><path d="M1.300 .4H.4V3.200H3.200V2.300M2 .4H3.200V1.600M3.200 .4 1.700 1.900" fill="none" stroke-width=".55" stroke="#c8d8d0"/></svg>
<div class="t" id="t123" style="top:716.22px;font-size:7.3px;color:#d6d6d8;left:140.00px;">Activity 1</div>
<div class="t" id="t124" style="top:716.22px;font-size:7.3px;color:#d6d6d8;left:200.00px;">533.12</div>
<div class="t" id="t125" style="top:716.22px;font-size:7.3px;color:#d6d6d8;left:280.00px;transform:scaleX(0.9628);">DrillingData.csv</div>
<div class="t" id="t126" style="top:716.22px;font-size:7.3px;color:#d6d6d8;left:360.00px;">Flaring</div>
<div class="t" id="t127" style="top:716.22px;font-size:7.3px;color:#d6d6d8;left:440.00px;">Tons</div>
<div class="t" id="t128" style="top:716.22px;font-size:7.3px;color:#d6d6d8;left:520.00px;">2024</div>
<div class="t" id="t129" style="top:716.22px;font-size:7.3px;color:#d6d6d8;left:600.00px;">EPA</div>
<div class="t" id="t130" style="top:716.22px;font-size:7.3px;color:#d6d6d8;left:680.00px;">CO2</div>
<div class="t" id="t131" style="top:716.22px;font-size:7.3px;color:#d6d6d8;left:760.00px;">-</div>
<div class="t" id="t132" style="top:716.22px;font-size:7.3px;color:#d6d6d8;left:840.00px;">-</div>
<div class="t" id="t133" style="top:716.22px;font-size:7.3px;color:#d6d6d8;left:920.00px;">Yes</div>
<div class="t" id="t134" style="top:716.22px;font-size:7.3px;color:#d6d6d8;left:1000.00px;">Yes</div>
<div class="t" id="t135" style="top:716.22px;font-size:7.3px;color:#f0f0f0;font-weight:bold;left:1079.60px;">63%</div>
<svg class="abs" style="left:331.50px;top:717.40px" width="3.6" height="3.6" viewBox="0 0 3.6 3.6"><path d="M1.300 .4H.4V3.200H3.200V2.300M2 .4H3.200V1.600M3.200 .4 1.700 1.900" fill="none" stroke-width=".55" stroke="#c0c0c4"/></svg>
<svg class="abs" style="left:1096.70px;top:717.40px" width="3.6" height="3.6" viewBox="0 0 3.6 3.6"><path d="M1.300 .4H.4V3.200H3.200V2.300M2 .4H3.200V1.600M3.200 .4 1.700 1.900" fill="none" stroke-width=".55" stroke="#c8d8d0"/></svg>
<div class="t" id="t136" style="top:729.32px;font-size:7.3px;color:#d6d6d8;left:140.00px;">Activity 1</div>
<div class="t" id="t137" style="top:729.32px;font-size:7.3px;color:#d6d6d8;left:200.00px;">841.11</div>
<div class="t" id="t138" style="top:729.32px;font-size:7.3px;color:#d6d6d8;left:280.00px;transform:scaleX(0.9628);">DrillingData.csv</div>
<div class="t" id="t139" style="top:729.32px;font-size:7.3px;color:#d6d6d8;left:360.00px;">Flaring</div>
<div class="t" id="t140" style="top:729.32px;font-size:7.3px;color:#d6d6d8;left:440.00px;">Tons</div>
<div class="t" id="t141" style="top:729.32px;font-size:7.3px;color:#d6d6d8;left:520.00px;">2024</div>
<div class="t" id="t142" style="top:729.32px;font-size:7.3px;color:#d6d6d8;left:600.00px;">EPA</div>
<div class="t" id="t143" style="top:729.32px;font-size:7.3px;color:#d6d6d8;left:680.00px;">CH4</div>
<div class="t" id="t144" style="top:729.32px;font-size:7.3px;color:#d6d6d8;left:760.00px;">-</div>
<div class="t" id="t145" style="top:729.32px;font-size:7.3px;color:#d6d6d8;left:840.00px;">-</div>
<div class="t" id="t146" style="top:729.32px;font-size:7.3px;color:#d6d6d8;left:920.00px;">Yes</div>
<div class="t" id="t147" style="top:729.32px;font-size:7.3px;color:#d6d6d8;left:1000.00px;">Yes</div>
<div class="t" id="t148" style="top:729.32px;font-size:7.3px;color:#f0f0f0;font-weight:bold;left:1079.60px;">98%</div>
<svg class="abs" style="left:331.50px;top:730.50px" width="3.6" height="3.6" viewBox="0 0 3.6 3.6"><path d="M1.300 .4H.4V3.200H3.200V2.300M2 .4H3.200V1.600M3.200 .4 1.700 1.900" fill="none" stroke-width=".55" stroke="#c0c0c4"/></svg>
<svg class="abs" style="left:1096.70px;top:730.50px" width="3.6" height="3.6" viewBox="0 0 3.6 3.6"><path d="M1.300 .4H.4V3.200H3.200V2.300M2 .4H3.200V1.600M3.200 .4 1.700 1.900" fill="none" stroke-width=".55" stroke="#c8d8d0"/></svg>
<div class="t" id="t149" style="top:742.42px;font-size:7.3px;color:#d6d6d8;left:140.00px;">Activity 1</div>
<div class="t" id="t150" style="top:742.42px;font-size:7.3px;color:#d6d6d8;left:200.00px;">533.12</div>
<div class="t" id="t151" style="top:742.42px;font-size:7.3px;color:#d6d6d8;left:280.00px;transform:scaleX(0.9628);">DrillingData.csv</div>
<div class="t" id="t152" style="top:742.42px;font-size:7.3px;color:#d6d6d8;left:360.00px;">Flaring</div>
<div class="t" id="t153" style="top:742.42px;font-size:7.3px;color:#d6d6d8;left:440.00px;">Tons</div>
<div class="t" id="t154" style="top:742.42px;font-size:7.3px;color:#d6d6d8;left:520.00px;">2024</div>
<div class="t" id="t155" style="top:742.42px;font-size:7.3px;color:#d6d6d8;left:600.00px;">EPA</div>
<div class="t" id="t156" style="top:742.42px;font-size:7.3px;color:#d6d6d8;left:680.00px;">SO2</div>
<div class="t" id="t157" style="top:742.42px;font-size:7.3px;color:#d6d6d8;left:760.00px;">-</div>
<div class="t" id="t158" style="top:742.42px;font-size:7.3px;color:#d6d6d8;left:840.00px;">-</div>
<div class="t" id="t159" style="top:742.42px;font-size:7.3px;color:#d6d6d8;left:920.00px;">No</div>
<div class="t" id="t160" style="top:742.42px;font-size:7.3px;color:#d6d6d8;left:1000.00px;">No</div>
<div class="t" id="t161" style="top:742.42px;font-size:7.3px;color:#f0f0f0;font-weight:bold;left:1079.60px;">45%</div>
<svg class="abs" style="left:331.50px;top:743.60px" width="3.6" height="3.6" viewBox="0 0 3.6 3.6"><path d="M1.300 .4H.4V3.200H3.200V2.300M2 .4H3.200V1.600M3.200 .4 1.700 1.900" fill="none" stroke-width=".55" stroke="#c0c0c4"/></svg>
<svg class="abs" style="left:1096.70px;top:743.60px" width="3.6" height="3.6" viewBox="0 0 3.6 3.6"><path d="M1.300 .4H.4V3.200H3.200V2.300M2 .4H3.200V1.600M3.200 .4 1.700 1.900" fill="none" stroke-width=".55" stroke="#c8d8d0"/></svg>
<div class="t" id="t162" style="top:755.52px;font-size:7.3px;color:#d6d6d8;left:140.00px;">Activity 1</div>
<div class="t" id="t163" style="top:755.52px;font-size:7.3px;color:#d6d6d8;left:200.00px;">123.12</div>
<div class="t" id="t164" style="top:755.52px;font-size:7.3px;color:#d6d6d8;left:280.00px;transform:scaleX(0.9628);">DrillingData.csv</div>
<div class="t" id="t165" style="top:755.52px;font-size:7.3px;color:#d6d6d8;left:360.00px;">Flaring</div>
<div class="t" id="t166" style="top:755.52px;font-size:7.3px;color:#d6d6d8;left:440.00px;">Tons</div>
<div class="t" id="t167" style="top:755.52px;font-size:7.3px;color:#d6d6d8;left:520.00px;">2024</div>
<div class="t" id="t168" style="top:755.52px;font-size:7.3px;color:#d6d6d8;left:600.00px;">EPA</div>
<div class="t" id="t169" style="top:755.52px;font-size:7.3px;color:#d6d6d8;left:680.00px;">CO2</div>
<div class="t" id="t170" style="top:755.52px;font-size:7.3px;color:#d6d6d8;left:760.00px;">-</div>
<div class="t" id="t171" style="top:755.52px;font-size:7.3px;color:#d6d6d8;left:840.00px;">-</div>
<div class="t" id="t172" style="top:755.52px;font-size:7.3px;color:#d6d6d8;left:920.00px;">No</div>
<div class="t" id="t173" style="top:755.52px;font-size:7.3px;color:#d6d6d8;left:1000.00px;">Yes</div>
<div class="t" id="t174" style="top:755.52px;font-size:7.3px;color:#f0f0f0;font-weight:bold;left:1079.60px;">67%</div>
<svg class="abs" style="left:331.50px;top:756.70px" width="3.6" height="3.6" viewBox="0 0 3.6 3.6"><path d="M1.300 .4H.4V3.200H3.200V2.300M2 .4H3.200V1.600M3.200 .4 1.700 1.900" fill="none" stroke-width=".55" stroke="#c0c0c4"/></svg>
<svg class="abs" style="left:1096.70px;top:756.70px" width="3.6" height="3.6" viewBox="0 0 3.6 3.6"><path d="M1.300 .4H.4V3.200H3.200V2.300M2 .4H3.200V1.600M3.200 .4 1.700 1.900" fill="none" stroke-width=".55" stroke="#c8d8d0"/></svg><div class="abs" style="left:1152px;top:41px;width:238px;height:22px;background:#292929;"></div>
<div class="abs" style="left:1152px;top:64px;width:238px;height:212px;background:#1f1f1f;"></div>
<div class="abs" style="left:1152px;top:277px;width:238px;height:226px;background:#272727;"></div>
<div class="abs" style="left:1152px;top:504px;width:238px;height:283px;background:#272727;"></div>
<div class="abs" style="left:1152px;top:41px;width:1px;height:746px;background:#3d3d3d;"></div>
<div class="abs" style="left:1152px;top:63px;width:238px;height:1px;background:#3d3d3d;"></div>
<div class="abs" style="left:1152px;top:276px;width:238px;height:1px;background:#363636;"></div>
<div class="abs" style="left:1152px;top:503px;width:238px;height:1px;background:#363636;"></div>
<div class="t" id="t175" style="top:48.18px;font-size:9.6px;color:#b9bfd0;-webkit-text-stroke:.22px;left:1168.60px;transform:scaleX(1.0344);">Statfjord has a total of 23,253 datapoints</div>
<div class="t" id="t176" style="top:81.33px;font-size:12.6px;color:#fff;font-weight:bold;left:1168.60px;transform:scaleX(0.9744);">Data Quality</div>
<div class="t" id="t177" style="top:98.08px;font-size:9.6px;color:#aeb4c6;-webkit-text-stroke:.22px;left:1168.60px;transform:scaleX(1.0313);">Total score of selected data source</div>
<svg class="abs" style="left:0;top:0" width="1500" height="300"><path d="M1235.30 137.92A66.4 66.4 0 0 1 1333.29 182.48" stroke="#13162c" stroke-width="9.300" fill="none" stroke-linecap="round"/><path d="M1224.12 245.25A66.4 66.4 0 0 1 1220.91 242.22" stroke="rgb(31, 32, 40)" stroke-width="7.800" fill="none"/><path d="M1221.57 242.87A66.4 66.4 0 0 1 1218.53 239.67" stroke="rgb(31, 32, 41)" stroke-width="7.800" fill="none"/><path d="M1219.15 240.36A66.4 66.4 0 0 1 1216.29 237.00" stroke="rgb(31, 33, 43)" stroke-width="7.800" fill="none"/><path d="M1216.87 237.72A66.4 66.4 0 0 1 1214.19 234.22" stroke="rgb(32, 33, 44)" stroke-width="7.800" fill="none"/><path d="M1214.73 234.97A66.4 66.4 0 0 1 1212.24 231.33" stroke="rgb(32, 34, 45)" stroke-width="7.800" fill="none"/><path d="M1212.74 232.11A66.4 66.4 0 0 1 1210.44 228.35" stroke="rgb(33, 35, 46)" stroke-width="7.800" fill="none"/><path d="M1210.90 229.15A66.4 66.4 0 0 1 1208.80 225.27" stroke="rgb(33, 35, 48)" stroke-width="7.800" fill="none"/><path d="M1209.22 226.10A66.4 66.4 0 0 1 1207.32 222.11" stroke="rgb(33, 36, 49)" stroke-width="7.800" fill="none"/><path d="M1207.70 222.96A66.4 66.4 0 0 1 1206.02 218.88" stroke="rgb(34, 36, 50)" stroke-width="7.800" fill="none"/><path d="M1206.35 219.75A66.4 66.4 0 0 1 1204.88 215.59" stroke="rgb(34, 37, 51)" stroke-width="7.800" fill="none"/><path d="M1205.16 216.47A66.4 66.4 0 0 1 1203.92 212.23" stroke="rgb(34, 37, 53)" stroke-width="7.800" fill="none"/><path d="M1204.16 213.13A66.4 66.4 0 0 1 1203.13 208.84" stroke="rgb(35, 38, 54)" stroke-width="7.800" fill="none"/><path d="M1203.32 209.75A66.4 66.4 0 0 1 1202.53 205.40" stroke="rgb(35, 39, 55)" stroke-width="7.800" fill="none"/><path d="M1202.67 206.32A66.4 66.4 0 0 1 1202.10 201.94" stroke="rgb(36, 39, 57)" stroke-width="7.800" fill="none"/><path d="M1202.20 202.87A66.4 66.4 0 0 1 1201.86 198.47" stroke="rgb(36, 40, 58)" stroke-width="7.800" fill="none"/><path d="M1201.91 199.39A66.4 66.4 0 0 1 1201.80 194.98" stroke="rgb(36, 40, 59)" stroke-width="7.800" fill="none"/><path d="M1201.80 195.91A66.4 66.4 0 0 1 1201.93 191.50" stroke="rgb(38, 42, 60)" stroke-width="7.800" fill="none"/><path d="M1201.88 192.42A66.4 66.4 0 0 1 1202.23 188.03" stroke="rgb(39, 43, 61)" stroke-width="7.800" fill="none"/><path d="M1202.13 188.95A66.4 66.4 0 0 1 1202.72 184.57" stroke="rgb(41, 45, 62)" stroke-width="7.800" fill="none"/><path d="M1202.57 185.49A66.4 66.4 0 0 1 1203.39 181.15" stroke="rgb(43, 46, 62)" stroke-width="7.800" fill="none"/><path d="M1203.20 182.06A66.4 66.4 0 0 1 1204.24 177.77" stroke="rgb(44, 48, 63)" stroke-width="7.800" fill="none"/><path d="M1204.00 178.67A66.4 66.4 0 0 1 1205.26 174.44" stroke="rgb(46, 49, 64)" stroke-width="7.800" fill="none"/><path d="M1204.97 175.32A66.4 66.4 0 0 1 1206.46 171.17" stroke="rgb(48, 51, 65)" stroke-width="7.800" fill="none"/><path d="M1206.12 172.03A66.4 66.4 0 0 1 1207.83 167.96" stroke="rgb(49, 52, 66)" stroke-width="7.800" fill="none"/><path d="M1207.45 168.80A66.4 66.4 0 0 1 1209.36 164.83" stroke="rgb(51, 54, 66)" stroke-width="7.800" fill="none"/><path d="M1208.94 165.65A66.4 66.4 0 0 1 1211.06 161.78" stroke="rgb(52, 55, 67)" stroke-width="7.800" fill="none"/><path d="M1210.59 162.58A66.4 66.4 0 0 1 1212.91 158.83" stroke="rgb(54, 57, 68)" stroke-width="7.800" fill="none"/><path d="M1212.40 159.61A66.4 66.4 0 0 1 1214.92 155.98" stroke="rgb(56, 58, 69)" stroke-width="7.800" fill="none"/><path d="M1214.37 156.73A66.4 66.4 0 0 1 1217.07 153.24" stroke="rgb(57, 60, 70)" stroke-width="7.800" fill="none"/><path d="M1216.48 153.96A66.4 66.4 0 0 1 1219.36 150.61" stroke="rgb(59, 61, 70)" stroke-width="7.800" fill="none"/><path d="M1218.74 151.30A66.4 66.4 0 0 1 1221.79 148.11" stroke="rgb(61, 63, 71)" stroke-width="7.800" fill="none"/><path d="M1221.13 148.76A66.4 66.4 0 0 1 1224.35 145.74" stroke="rgb(66, 67, 70)" stroke-width="7.800" fill="none"/><path d="M1223.66 146.36A66.4 66.4 0 0 1 1227.02 143.51" stroke="rgb(73, 72, 67)" stroke-width="7.800" fill="none"/><path d="M1226.30 144.09A66.4 66.4 0 0 1 1229.81 141.42" stroke="rgb(80, 78, 65)" stroke-width="7.800" fill="none"/><path d="M1229.06 141.96A66.4 66.4 0 0 1 1232.71 139.48" stroke="rgb(88, 83, 62)" stroke-width="7.800" fill="none"/><path d="M1231.93 139.98A66.4 66.4 0 0 1 1235.71 137.69" stroke="rgb(95, 89, 60)" stroke-width="7.800" fill="none"/><path d="M1234.90 138.15A66.4 66.4 0 0 1 1238.79 136.07" stroke="rgb(103, 94, 57)" stroke-width="7.800" fill="none"/><path d="M1237.96 136.49A66.4 66.4 0 0 1 1241.95 134.61" stroke="rgb(110, 100, 54)" stroke-width="7.800" fill="none"/><path d="M1241.10 134.98A66.4 66.4 0 0 1 1245.19 133.31" stroke="rgb(124, 109, 50)" stroke-width="7.800" fill="none"/><path d="M1244.32 133.64A66.4 66.4 0 0 1 1248.49 132.19" stroke="rgb(138, 119, 46)" stroke-width="7.800" fill="none"/><path d="M1247.61 132.47A66.4 66.4 0 0 1 1251.85 131.25" stroke="rgb(152, 128, 42)" stroke-width="7.800" fill="none"/><path d="M1250.95 131.48A66.4 66.4 0 0 1 1255.25 130.48" stroke="rgb(166, 137, 39)" stroke-width="7.800" fill="none"/><path d="M1254.34 130.66A66.4 66.4 0 0 1 1258.68 129.89" stroke="rgb(175, 143, 35)" stroke-width="7.800" fill="none"/><path d="M1257.77 130.03A66.4 66.4 0 0 1 1262.14 129.48" stroke="rgb(183, 148, 31)" stroke-width="7.800" fill="none"/><path d="M1261.22 129.57A66.4 66.4 0 0 1 1265.62 129.25" stroke="rgb(190, 153, 27)" stroke-width="7.800" fill="none"/><path d="M1264.70 129.29A66.4 66.4 0 0 1 1269.11 129.21" stroke="rgb(198, 159, 24)" stroke-width="7.800" fill="none"/><path d="M1268.18 129.20A66.4 66.4 0 0 1 1272.59 129.35" stroke="rgb(203, 161, 21)" stroke-width="7.800" fill="none"/><path d="M1271.67 129.29A66.4 66.4 0 0 1 1276.06 129.67" stroke="rgb(203, 161, 21)" stroke-width="7.800" fill="none"/><path d="M1275.14 129.56A66.4 66.4 0 0 1 1279.51 130.17" stroke="rgb(203, 161, 21)" stroke-width="7.800" fill="none"/><path d="M1278.60 130.02A66.4 66.4 0 0 1 1282.93 130.85" stroke="rgb(203, 161, 20)" stroke-width="7.800" fill="none"/><path d="M1282.02 130.66A66.4 66.4 0 0 1 1286.31 131.72" stroke="rgb(203, 161, 20)" stroke-width="7.800" fill="none"/><path d="M1285.41 131.47A66.4 66.4 0 0 1 1289.64 132.75" stroke="rgb(203, 161, 20)" stroke-width="7.800" fill="none"/><path d="M1288.76 132.46A66.4 66.4 0 0 1 1292.90 133.97" stroke="rgb(203, 161, 20)" stroke-width="7.800" fill="none"/><path d="M1292.04 133.63A66.4 66.4 0 0 1 1296.10 135.35" stroke="rgb(203, 161, 19)" stroke-width="7.800" fill="none"/><path d="M1295.26 134.96A66.4 66.4 0 0 1 1299.23 136.90" stroke="rgb(203, 161, 19)" stroke-width="7.800" fill="none"/><path d="M1298.41 136.47A66.4 66.4 0 0 1 1302.27 138.60" stroke="rgb(204, 161, 19)" stroke-width="7.800" fill="none"/><path d="M1301.47 138.13A66.4 66.4 0 0 1 1305.21 140.47" stroke="rgb(204, 161, 18)" stroke-width="7.800" fill="none"/><path d="M1304.44 139.96A66.4 66.4 0 0 1 1308.05 142.49" stroke="rgb(204, 161, 18)" stroke-width="7.800" fill="none"/><path d="M1307.31 141.94A66.4 66.4 0 0 1 1310.78 144.65" stroke="rgb(204, 161, 18)" stroke-width="7.800" fill="none"/><path d="M1310.07 144.06A66.4 66.4 0 0 1 1313.40 146.96" stroke="rgb(204, 161, 17)" stroke-width="7.800" fill="none"/><path d="M1312.72 146.33A66.4 66.4 0 0 1 1315.89 149.40" stroke="rgb(204, 161, 17)" stroke-width="7.800" fill="none"/><path d="M1315.24 148.74A66.4 66.4 0 0 1 1318.25 151.96" stroke="rgb(204, 161, 17)" stroke-width="7.800" fill="none"/><path d="M1317.64 151.27A66.4 66.4 0 0 1 1320.47 154.65" stroke="rgb(204, 161, 16)" stroke-width="7.800" fill="none"/><path d="M1319.89 153.93A66.4 66.4 0 0 1 1322.55 157.45" stroke="rgb(205, 161, 16)" stroke-width="7.800" fill="none"/><path d="M1322.01 156.70A66.4 66.4 0 0 1 1324.47 160.36" stroke="rgb(205, 161, 16)" stroke-width="7.800" fill="none"/><path d="M1323.98 159.57A66.4 66.4 0 0 1 1326.25 163.36" stroke="rgb(205, 161, 16)" stroke-width="7.800" fill="none"/><path d="M1325.79 162.55A66.4 66.4 0 0 1 1327.86 166.45" stroke="rgb(205, 161, 15)" stroke-width="7.800" fill="none"/><path d="M1327.45 165.62A66.4 66.4 0 0 1 1329.31 169.62" stroke="rgb(205, 161, 15)" stroke-width="7.800" fill="none"/><path d="M1328.94 168.77A66.4 66.4 0 0 1 1330.59 172.86" stroke="rgb(205, 161, 15)" stroke-width="7.800" fill="none"/><path d="M1330.26 171.99A66.4 66.4 0 0 1 1331.69 176.17" stroke="rgb(205, 161, 14)" stroke-width="7.800" fill="none"/><path d="M1331.42 175.28A66.4 66.4 0 0 1 1332.63 179.53" stroke="rgb(205, 161, 14)" stroke-width="7.800" fill="none"/><path d="M1332.39 178.63A66.4 66.4 0 0 1 1333.38 182.93" stroke="rgb(205, 161, 14)" stroke-width="7.800" fill="none"/><circle cx="1223.77" cy="244.94" r="3.900" fill="rgb(31, 32, 40)"/><circle cx="1333.29" cy="182.48" r="3.900" fill="rgb(206, 161, 14)"/><circle cx="1268.400" cy="174.500" r="16.700" fill="#10142a"/><circle cx="1268.400" cy="174.500" r="15.500" fill="#ebb705"/><circle cx="1268.400" cy="174.500" r="7.700" fill="none" stroke="#fff" stroke-width="1.400"/><circle cx="1265.700" cy="172.300" r="1.100" fill="#fff"/><circle cx="1271.100" cy="172.300" r="1.100" fill="#fff"/><path d="M1264.200 175.800h8.400a4.200 4.200 0 0 1-8.400 0z" fill="#fff"/></svg>
<div class="t" id="t178" style="top:209.00px;font-size:20px;color:#fff;font-weight:bold;left:1250.30px;transform:scaleX(0.9443);">72%</div>
<div class="t" id="t179" style="top:230.83px;font-size:8.6px;color:#aeb4c6;left:1240.40px;transform:scaleX(0.9757);">Review Needed</div>
<div class="t" id="t180" style="top:221.60px;font-size:8px;color:#aeb4c6;left:1187.80px;transform:scaleX(0.9773);">0%</div>
<div class="t" id="t181" style="top:221.60px;font-size:8px;color:#aeb4c6;left:1333.70px;transform:scaleX(0.9234);">100%</div>
<div class="t" id="t182" style="top:294.53px;font-size:12.6px;color:#fff;font-weight:bold;left:1168.40px;transform:scaleX(0.9763);">Data Abnormalities</div>
<div class="t" id="t183" style="top:311.28px;font-size:9.6px;color:#aeb4c6;-webkit-text-stroke:.22px;left:1168.40px;transform:scaleX(1.0181);">A total of 27 outliers flagged for all areas</div>
<div class="t" id="t184" style="top:337.73px;font-size:6.6px;color:#aeb4c6;left:1168.40px;transform:scaleX(1.0117);">Area</div>
<div class="t" id="t185" style="top:337.73px;font-size:6.6px;color:#aeb4c6;left:1289.00px;transform:scaleX(1.0117);">% Over Median Value</div>
<div class="abs" style="left:1168.4px;top:355.6px;width:204.5999999999999px;height:1.1999999999999886px;background:#3f4152;"></div>
<div class="t" id="t186" style="top:366.12px;font-size:8.4px;color:#fff;font-weight:bold;left:1168.40px;transform:scaleX(1.0338);">Statfjord</div>
<div class="t" id="t187" style="top:366.12px;font-size:8.4px;color:#fff;font-weight:bold;left:1289.70px;transform:scaleX(0.9493);">183 kg / 49%</div>
<div class="abs" style="left:1289.7px;top:376.2px;width:83.29999999999995px;height:1.3999999999999773px;background:#2a2d4a;"></div>
<div class="abs" style="left:1289.7px;top:376.2px;width:43.899999999999864px;height:1.3999999999999773px;background:#1677e8;"></div>
<div class="abs" style="left:1168.4px;top:384.0px;width:204.5999999999999px;height:0.7999999999999545px;background:#3a3a3e;"></div>
<div class="t" id="t188" style="top:394.87px;font-size:8.4px;color:#fff;font-weight:bold;left:1168.40px;transform:scaleX(1.0338);">Statfjord</div>
<div class="t" id="t189" style="top:394.87px;font-size:8.4px;color:#fff;font-weight:bold;left:1289.70px;transform:scaleX(0.9392);">203 kg / 71%</div>
<div class="abs" style="left:1289.7px;top:404.95px;width:83.29999999999995px;height:1.3999999999999773px;background:#2a2d4a;"></div>
<div class="abs" style="left:1289.7px;top:404.95px;width:67.09999999999991px;height:1.3999999999999773px;background:#1677e8;"></div>
<div class="abs" style="left:1168.4px;top:412.75px;width:204.5999999999999px;height:0.7999999999999545px;background:#3a3a3e;"></div>
<div class="t" id="t190" style="top:423.62px;font-size:8.4px;color:#fff;font-weight:bold;left:1168.40px;transform:scaleX(0.9778);">Snorre</div>
<div class="t" id="t191" style="top:423.62px;font-size:8.4px;color:#fff;font-weight:bold;left:1289.70px;transform:scaleX(0.9192);">171 kg / 45%</div>
<div class="abs" style="left:1289.7px;top:433.7px;width:83.29999999999995px;height:1.3999999999999773px;background:#2a2d4a;"></div>
<div class="abs" style="left:1289.7px;top:433.7px;width:37.899999999999864px;height:1.3999999999999773px;background:#1677e8;"></div>
<div class="abs" style="left:1168.4px;top:441.5px;width:204.5999999999999px;height:0.7999999999999545px;background:#3a3a3e;"></div>
<div class="t" id="t192" style="top:452.37px;font-size:8.4px;color:#fff;font-weight:bold;left:1168.40px;transform:scaleX(0.9562);">Gullfaks</div>
<div class="t" id="t193" style="top:452.37px;font-size:8.4px;color:#fff;font-weight:bold;left:1289.70px;transform:scaleX(0.9364);">42 kg / 12%</div>
<div class="abs" style="left:1289.7px;top:462.45px;width:83.29999999999995px;height:1.3999999999999773px;background:#2a2d4a;"></div>
<div class="abs" style="left:1289.7px;top:462.45px;width:12.799999999999955px;height:1.3999999999999773px;background:#1677e8;"></div>
<div class="abs" style="left:1168.4px;top:470.25px;width:204.5999999999999px;height:0.7999999999999545px;background:#3a3a3e;"></div>
<div class="t" id="t194" style="top:481.74px;font-size:6.8px;color:#aeb4c6;left:1327.60px;transform:scaleX(1.0132);">Show next 5</div>
<svg class="abs" style="left:1369.45px;top:482.10px" width="3.5" height="5.6" viewBox="0 0 3.5 5.6"><path d="M.6 .5 2.900 2.800 .6 5.100" fill="none" stroke="#b8bccb" stroke-width=".8"/></svg>
<div class="t" id="t195" style="top:522.23px;font-size:12.6px;color:#fff;font-weight:bold;left:1168.60px;transform:scaleX(0.9689);">Data Visualization</div>
<div class="t" id="t196" style="top:539.18px;font-size:9.6px;color:#aeb4c6;-webkit-text-stroke:.22px;left:1168.60px;transform:scaleX(1.0031);">Emission in areas you control</div>
<svg class="abs" style="left:0;top:0" width="1500" height="806"><defs><linearGradient id="bg1" x1="0" y1="0" x2="0" y2="1"><stop offset="0" stop-color="#2c2f58"/><stop offset=".34" stop-color="#262c68"/><stop offset=".5" stop-color="#0a1f6e"/><stop offset=".68" stop-color="#0b2a9a"/><stop offset="1" stop-color="#0f3fe0"/></linearGradient><linearGradient id="bg2" x1="0" y1="0" x2="0" y2="1"><stop offset="0" stop-color="#2a2d58"/><stop offset=".35" stop-color="#242c7a"/><stop offset=".7" stop-color="#1a39c8"/><stop offset="1" stop-color="#1548f5"/></linearGradient><linearGradient id="bg3" x1="0" y1="0" x2="0" y2="1"><stop offset="0" stop-color="#2a2d50"/><stop offset=".4" stop-color="#222a78"/><stop offset="1" stop-color="#1546ee"/></linearGradient></defs><rect x="1227" y="603" width="20.500" height="138" fill="url(#bg1)"/><rect x="1282" y="629.800" width="20.500" height="111.200" fill="url(#bg2)"/><rect x="1336" y="690.800" width="20.500" height="50.200" fill="url(#bg3)"/><path d="M1196.500 576V741.400H1372.500" fill="none" stroke="#dcdcdc" stroke-width="1"/><path d="M1197 602.8H1247.5" stroke="#e4e4e4" stroke-width=".9" stroke-dasharray="1.300 1.100"/><path d="M1197 629.6H1302.5" stroke="#e4e4e4" stroke-width=".9" stroke-dasharray="1.300 1.100"/><path d="M1197 690.6H1356.5" stroke="#e4e4e4" stroke-width=".9" stroke-dasharray="1.300 1.100"/><path d="M1197 643.200H1356.500" stroke="#4fbf7a" stroke-width=".9" stroke-dasharray="1.300 1.100"/></svg>
<div class="t" id="t197" style="top:576.79px;font-size:6.9px;color:#f4f4f4;left:1169.50px;transform:scaleX(1.1386);">15,000</div>
<div class="t" id="t198" style="top:600.59px;font-size:6.9px;color:#f4f4f4;left:1171.00px;transform:scaleX(1.0675);">12,531</div>
<div class="t" id="t199" style="top:627.39px;font-size:6.9px;color:#f4f4f4;left:1175.00px;transform:scaleX(1.0725);">9,151</div>
<div class="t" id="t200" style="top:657.19px;font-size:6.9px;color:#f4f4f4;left:1174.00px;transform:scaleX(1.1304);">7,500</div>
<div class="t" id="t201" style="top:688.39px;font-size:6.9px;color:#f4f4f4;left:1174.50px;transform:scaleX(1.1014);">4,331</div>
<div class="t" id="t202" style="top:735.29px;font-size:6.9px;color:#f4f4f4;left:1189.50px;transform:scaleX(1.0407);">0</div>
<div class="t" id="t203" style="top:593.64px;font-size:6.8px;color:#c9cee0;left:1227.65px;transform:scaleX(1.0113);">48.2%</div>
<div class="t" id="t204" style="top:620.04px;font-size:6.8px;color:#c9cee0;left:1282.75px;transform:scaleX(1.0113);">35.2%</div>
<div class="t" id="t205" style="top:680.74px;font-size:6.8px;color:#c9cee0;left:1337.15px;transform:scaleX(0.9595);">17.7%</div>
<div class="t" id="t206" style="top:748.14px;font-size:6.8px;color:#c9cee0;left:1222.30px;transform:scaleX(1.1062);">Statfjord</div>
<div class="t" id="t207" style="top:748.14px;font-size:6.8px;color:#c9cee0;left:1281.60px;transform:scaleX(1.0291);">Snorre</div>
<div class="t" id="t208" style="top:748.14px;font-size:6.8px;color:#c9cee0;left:1333.40px;transform:scaleX(1.0585);">Gullfaks</div>
<div class="t" id="t209" style="top:635.32px;font-size:4.4px;color:#5fd08a;font-weight:bold;left:1309.20px;transform:scaleX(1.0794);">(8,671 kg CO₂)</div></div></div>
</body></html>
